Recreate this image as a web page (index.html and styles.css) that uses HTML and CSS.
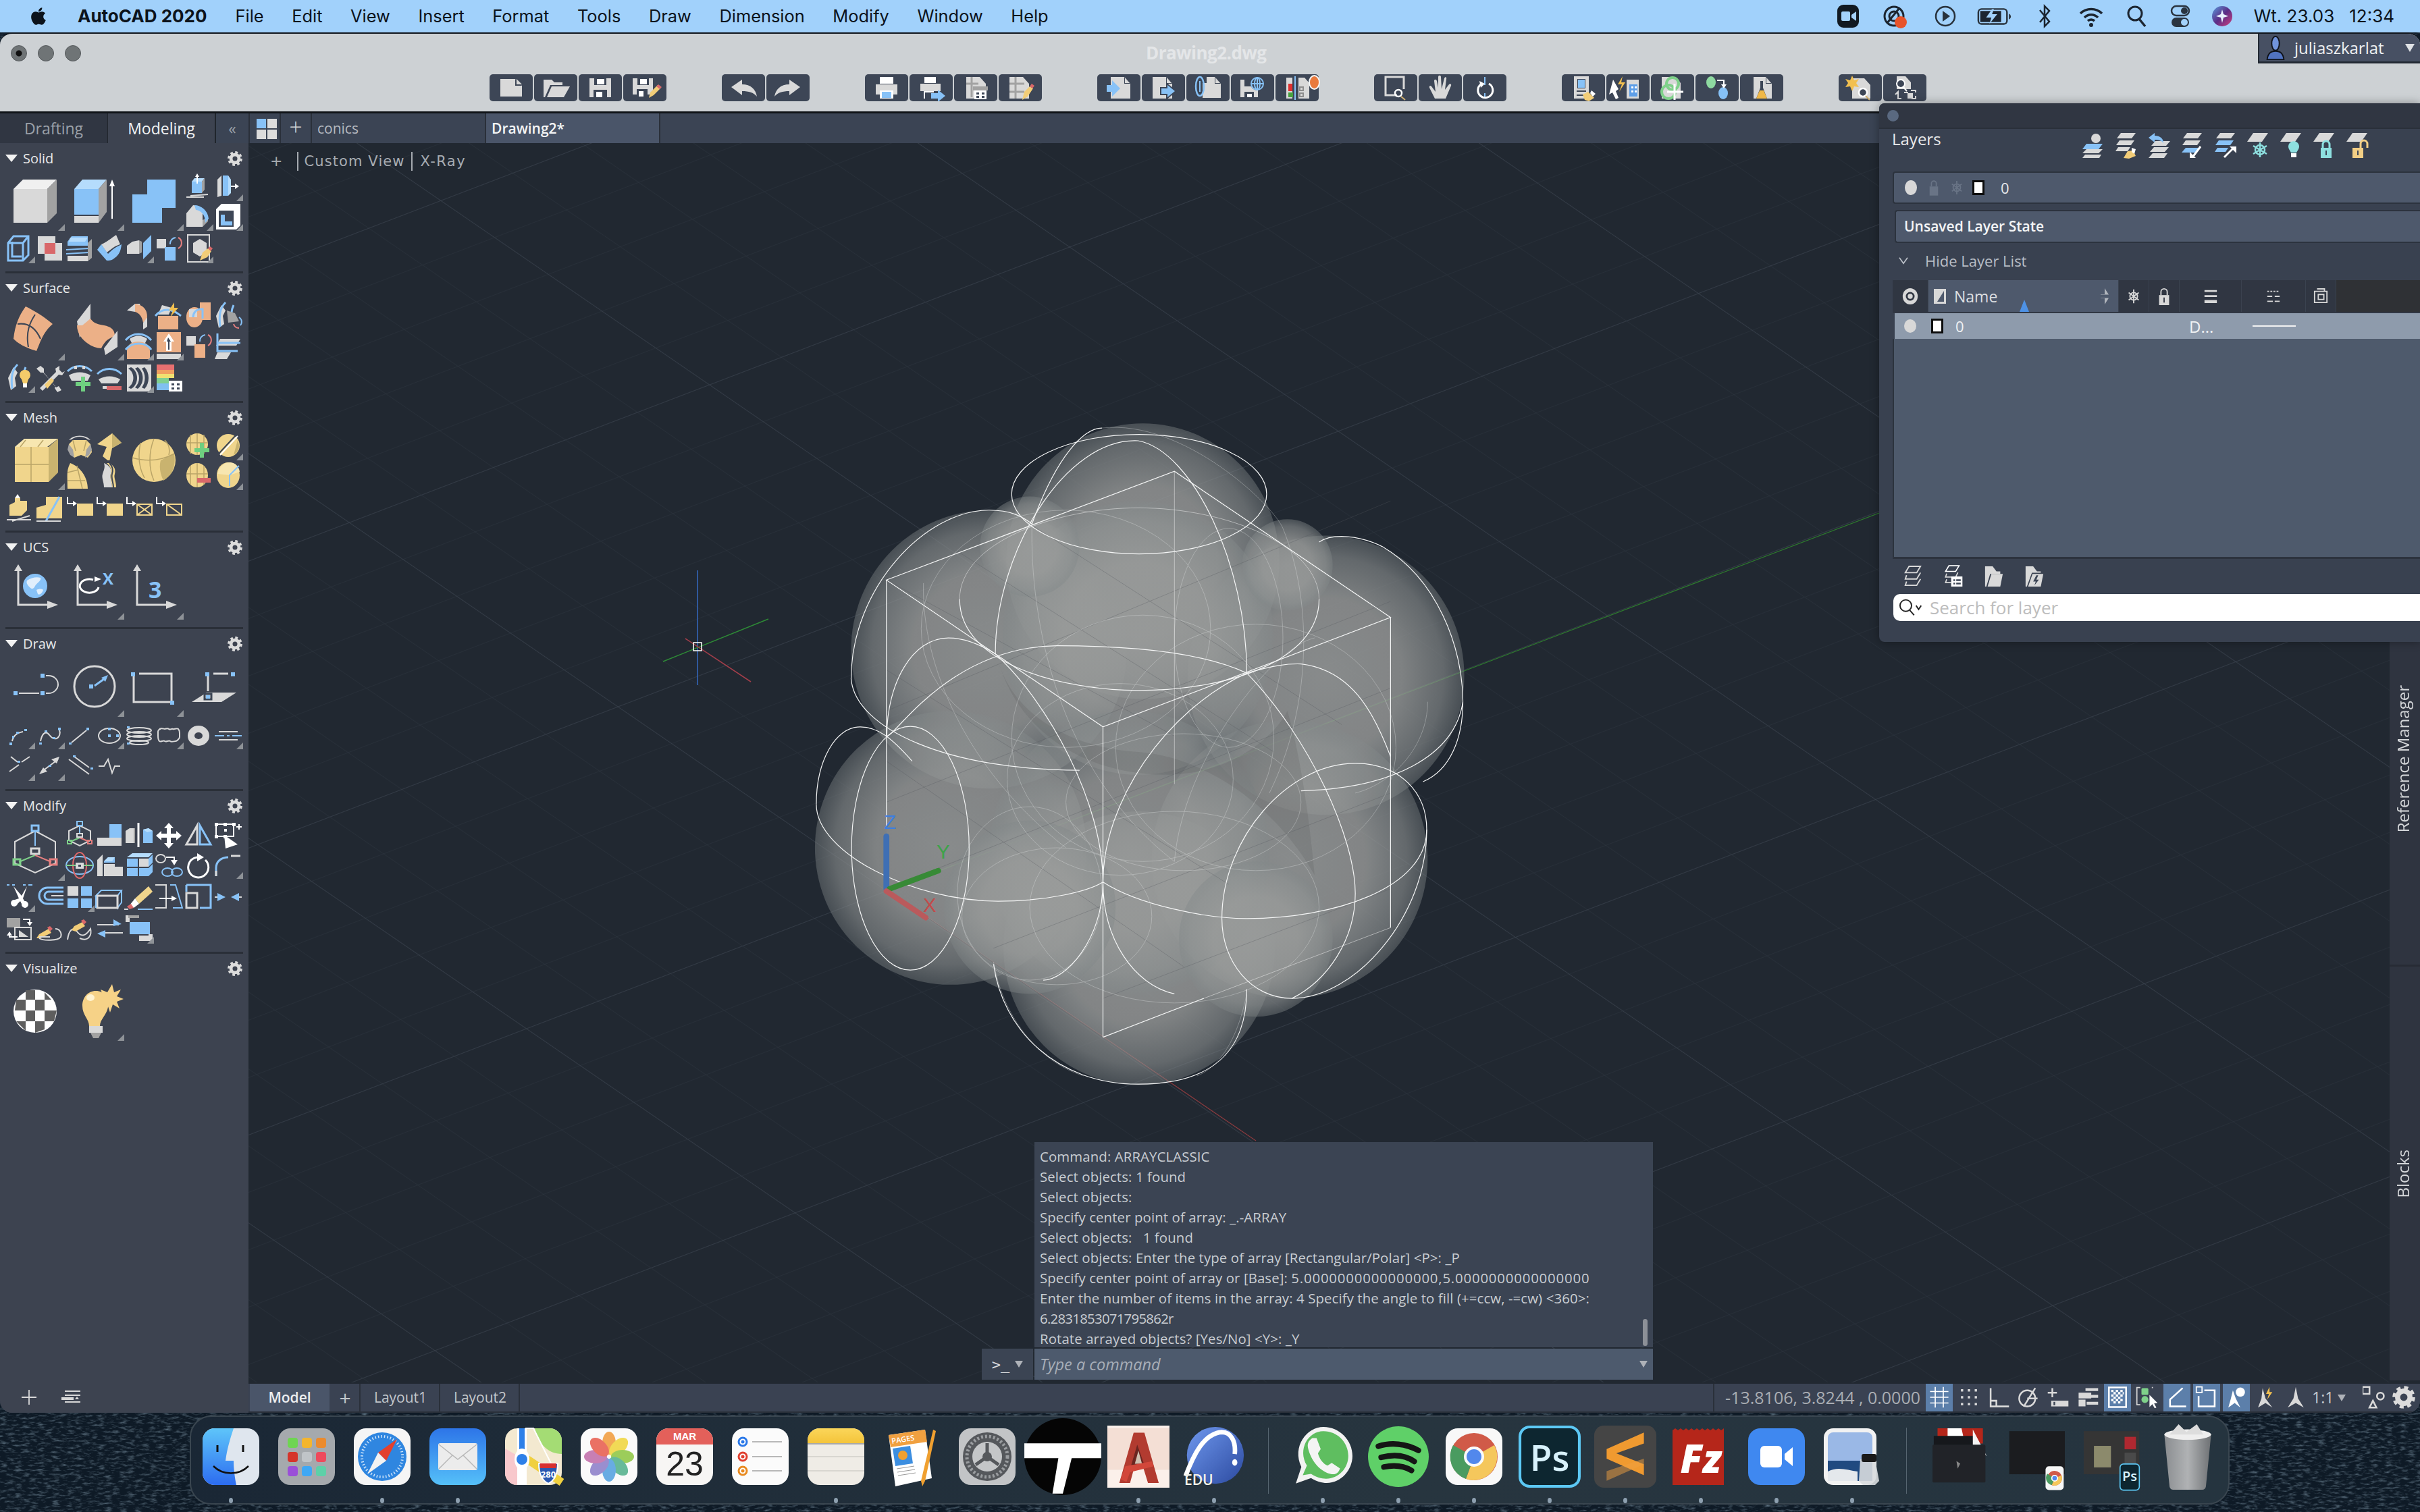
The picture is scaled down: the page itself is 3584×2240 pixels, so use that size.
FILE: index.html
```html
<!DOCTYPE html>
<html lang="en">
<head>
<meta charset="utf-8">
<title>AutoCAD 2020</title>
<link rel="stylesheet" href="styles.css">
</head>
<body>
<svg class="wallpaper" width="3584" height="2240"><filter id="sea"><feTurbulence type="fractalNoise" baseFrequency="0.09 0.3" numOctaves="3" seed="4"/><feColorMatrix values="0 0 0 0 .25  0 0 0 0 .36  0 0 0 0 .45  1.3 0 0 0 -.62"/></filter><rect width="3584" height="2240" fill="#0e1a26"/><rect width="3584" height="2240" filter="url(#sea)"/></svg>

<header class="menubar">
  <svg class="apple" viewBox="0 0 24 24"><path d="M17.05 20.28c-.98.95-2.05.8-3.08.35-1.09-.46-2.09-.48-3.24 0-1.44.62-2.2.44-3.06-.35C2.79 15.25 3.51 7.59 9.05 7.31c1.35.07 2.29.74 3.08.8 1.18-.24 2.31-.93 3.57-.84 1.51.12 2.65.72 3.4 1.8-3.12 1.87-2.38 5.98.48 7.13-.57 1.5-1.31 2.99-2.54 4.09zM12.03 7.25c-.15-2.23 1.66-4.07 3.74-4.25.29 2.58-2.34 4.5-3.74 4.25z"/></svg>
  <strong class="appname">AutoCAD 2020</strong>
  <nav class="menus"><span>File</span><span>Edit</span><span>View</span><span>Insert</span><span>Format</span><span>Tools</span><span>Draw</span><span>Dimension</span><span>Modify</span><span>Window</span><span>Help</span></nav>
  <div class="tray">
    <svg viewBox="0 0 40 40"><rect x="4" y="3" width="32" height="34" rx="9" fill="#121a22"/><rect x="10" y="13" width="13" height="14" rx="2" fill="#a3d2fb"/><path d="M25 18l7-5v14l-7-5z" fill="#a3d2fb"/></svg>
    <svg viewBox="0 0 40 40"><circle cx="18" cy="20" r="14" fill="none" stroke="#1c2530" stroke-width="3"/><circle cx="18" cy="20" r="7" fill="none" stroke="#1c2530" stroke-width="3"/><path d="M8 30L26 8" stroke="#1c2530" stroke-width="3"/><circle cx="28" cy="29" r="9" fill="#e8532a"/></svg>
    <svg viewBox="0 0 40 40"><circle cx="20" cy="20" r="14" fill="none" stroke="#28323c" stroke-width="2.5"/><path d="M16 12l11 8-11 8z" fill="#28323c"/></svg>
    <svg viewBox="0 0 56 40"><rect x="3" y="9" width="44" height="23" rx="5" fill="none" stroke="#28323c" stroke-width="2.5"/><path d="M6 12h32v17H6z" fill="#1c2530"/><path d="M24 9l-9 13h8l-3 10 12-15h-8l3-8z" fill="#a3d2fb"/><path d="M50 16v9c2-1 3-3 3-4.500s-1-3.500-3-4.500z" fill="#28323c"/></svg>
    <svg viewBox="0 0 40 40"><path d="M13 11l14 17-7 7V5l7 7-14 17" fill="none" stroke="#1c2530" stroke-width="2.500"/></svg>
    <svg viewBox="0 0 40 40"><path d="M4 16a23 23 0 0 1 32 0M10 22a14 14 0 0 1 20 0M15 27a7 7 0 0 1 10 0" fill="none" stroke="#1c2530" stroke-width="3.500"/><circle cx="20" cy="33" r="3" fill="#1c2530"/></svg>
    <svg viewBox="0 0 40 40"><circle cx="18" cy="16" r="10" fill="none" stroke="#1c2530" stroke-width="3"/><path d="M24 24l9 11" stroke="#1c2530" stroke-width="3.500"/></svg>
    <svg viewBox="0 0 40 40"><rect x="7" y="5" width="26" height="14" rx="7" fill="none" stroke="#2a3440" stroke-width="2.500"/><circle cx="26" cy="12" r="5" fill="#2a3440"/><rect x="7" y="22" width="26" height="14" rx="7" fill="#2a3440"/><circle cx="26" cy="29" r="5" fill="#a3d2fb"/></svg>
    <svg viewBox="0 0 40 40"><defs><linearGradient id="siri" x1="0" y1="0" x2="1" y2="1"><stop offset="0" stop-color="#5a9de0"/><stop offset=".5" stop-color="#5b2d86"/><stop offset="1" stop-color="#d1407c"/></linearGradient></defs><circle cx="20" cy="20" r="15" fill="url(#siri)"/><path d="M20 10l2 7 7 3-7 2-2 8-2-8-7-2 7-3z" fill="#e8f2ff"/></svg>
  </div>
  <div class="clock"><span>Wt. 23.03</span><span>12:34</span></div>
</header>

<div class="window">
  <div class="titlebar">
    <div class="titlerow">
      <div class="lights"><i class="light first"></i><i class="light"></i><i class="light"></i></div>
      <div class="doctitle">Drawing2.dwg</div>
      <div class="user"><svg class="usericon" viewBox="0 0 32 40"><ellipse cx="16" cy="13" rx="6" ry="11" fill="#7194dc" stroke="#10141c" stroke-width="2"/><path d="M3 38c1-10 6-13 13-13s12 3 13 13z" fill="#5173c0" stroke="#10141c" stroke-width="2"/></svg><span>juliaszkarlat</span><i class="usertri"></i></div>
    </div>
    <div class="toolbar">
      <div class="tgroup">
        <div class="tb"><svg viewBox="0 0 64 40"><path class="g" d="M16 7H38L48 17V33H16z"/><path class="k" d="M38 7v10h10z"/><path class="g" d="M40 7l8 8h-8z"/></svg></div>
        <div class="tb"><svg viewBox="0 0 64 40"><path class="g" d="M14 8h12l4 4h12v4H24L16 34h-2z"/><path class="g" d="M26 18H53L44 34H19z"/></svg></div>
        <div class="tb"><svg viewBox="0 0 64 40"><path class="g" d="M16 6H48V34H16z"/><path class="k" d="M23 6h18v10H23zM22 23h20v11H22z"/><path class="w" d="M27 7h11v8H27zM26 26h9v8h-9z"/></svg></div>
        <div class="tb"><svg viewBox="0 0 64 40"><path class="g" d="M14 6H44V30H14z"/><path class="k" d="M21 6h17v10H21zM20 22h16v12H20z"/><path class="w" d="M25 7h10v8H25zM23 25h7v8h-7z"/><path class="pen" d="M38 35l2-8 11-11 5 4-11 11z"/><path class="r" d="M49 18l3-3 5 4-3 3z"/></svg></div>
      </div>
      <div class="tgroup">
        <div class="tb"><svg viewBox="0 0 64 40"><path class="g" d="M14 19L30 8v7c13 0 20 7 22 18-5-6-12-8-22-8v6z"/></svg></div>
        <div class="tb"><svg viewBox="0 0 64 40"><path class="g" d="M50 19L34 8v7c-13 0-20 7-22 18 5-6 12-8 22-8v6z"/></svg></div>
      </div>
      <div class="tgroup">
        <div class="tb"><svg viewBox="0 0 64 40"><path class="w" d="M22 4h20v10H22z"/><path class="g" d="M16 15h32v15H16z"/><path class="w" d="M22 24h20v12H22z"/><path class="b" d="M25 26h14v9H25z"/></svg></div>
        <div class="tb"><svg viewBox="0 0 64 40"><path class="w" d="M22 4h17v9H22z"/><path class="g" d="M16 14h30v11H16z"/><path class="sw" d="M22 36V26h14"/><path class="b" d="M32 28h10v-5l11 9-11 9v-5H32z"/></svg></div>
        <div class="tb"><svg viewBox="0 0 64 40"><path class="g" d="M18 4h20l9 10v22H18z"/><path class="mid" d="M18 14h18M26 4v30" /><path class="d" d="M28 18h22v6H28z"/><path class="w" d="M30 24h18v13H30z"/><path class="k" d="M33 27h4v3h-4zM41 27h4v3h-4zM33 32h4v3h-4zM41 32h4v3h-4z"/></svg></div>
        <div class="tb"><svg viewBox="0 0 64 40"><path class="g" d="M16 4h20l9 10v22H16z"/><path class="mid" d="M16 14h22M16 26h22M25 4v32"/><path class="pen" d="M35 38l3-12 8-8 5 3-8 12z"/><path class="r" d="M46 18l3-4 4 3-3 4z"/></svg></div>
      </div>
      <div class="tgroup">
        <div class="tb"><svg viewBox="0 0 64 40"><path class="g" d="M20 4h20l9 10v22H20z"/><path class="k" d="M40 4v10h9z"/><path class="g" d="M41 5l7 8h-7z"/><path class="b" d="M14 16h8v-7l12 12-12 12v-7h-8z"/></svg></div>
        <div class="tb"><svg viewBox="0 0 64 40"><path class="g" d="M16 4h20l9 10v22H16z"/><path class="k" d="M36 4v10h9z"/><path class="g" d="M37 5l7 8h-7z"/><path class="k" d="M27 19h9v-7l16 13-16 13v-7h-9z"/><path class="b" d="M29 21h9v-5l11 9-11 9v-5h-9z"/></svg></div>
        <div class="tb"><svg viewBox="0 0 64 40"><path class="g" d="M24 13h6v-9h12l9 10v21H24z"/><path class="k" d="M42 4v10h9z"/><path class="g" d="M43 5l7 8h-7z"/><ellipse cx="20" cy="18" rx="6" ry="14" fill="none" stroke="#86c1f6" stroke-width="2.500"/><path class="sb" d="M20 10v16"/></svg></div>
        <div class="tb"><svg viewBox="0 0 64 40"><path class="g" d="M14 8H40V34H14z"/><path class="k" d="M20 26h14v8H20zM20 8h12v10H20z"/><path class="w" d="M24 29h7v5h-7z"/><circle cx="39" cy="14" r="10" fill="#3d4656"/><circle cx="39" cy="14" r="9" fill="none" stroke="#86c1f6" stroke-width="2"/><path class="sb" d="M39 5v18M30 14h18"/><ellipse cx="39" cy="14" rx="4" ry="9" fill="none" stroke="#86c1f6" stroke-width="2"/></svg></div>
        <div class="tb badge"><svg viewBox="0 0 64 40"><path class="g" d="M16 5h9v31h-9zM34 5h9l7 8v23H34z"/><path class="sb" d="M29 3v35"/><path fill="#e03030" d="M19 14h6v11h-6z"/><path fill="#46a040" d="M19 27h7v7h-7z"/><path class="mid2" d="M36 19h5v5h-5zM36 28h5v5h-5z"/></svg><i class="dot"></i></div>
      </div>
      <div class="tgroup">
        <div class="tb"><svg viewBox="0 0 64 40"><path class="sg3" d="M34 31H17V4h27v18"/><circle cx="36" cy="28" r="5" fill="none" stroke="#fff" stroke-width="2.500"/><path d="M40 33l6 5" stroke="#d0b070" stroke-width="2"/></svg></div>
        <div class="tb"><svg viewBox="0 0 64 40"><path class="g" d="M24 36l-8-16c-1-3 2-4 3-2l6 8-2-16c0-3 3-3 4 0l2 10V4c0-3 4-3 4 0l1 18 4-16c1-3 4-2 3 1l-2 16 6-8c2-2 4 0 3 2l-8 19z"/></svg></div>
        <div class="tb"><svg viewBox="0 0 64 40"><path class="sb" d="M32 4v12M32 28v8"/><path class="sw3" d="M38 14a11 11 0 1 1-12 1"/><path class="w" d="M24 10l8 4-6 6z"/></svg></div>
      </div>
      <div class="tgroup">
        <div class="tb"><svg viewBox="0 0 64 40"><path class="g" d="M18 3h22v33H18z"/><path class="k" d="M23 7h12v14H23z"/><path class="b" d="M24 8h10v12H24z"/><path class="sk" d="M22 25h14M22 31h12"/><path class="pen" d="M34 38l-3-8 8-4 9 9-8 5z"/><path class="w" d="M44 24l6 5-4 4-4-5z"/></svg></div>
        <div class="tb"><svg viewBox="0 0 64 40"><path class="w" d="M10 8l8 14-4 3 4 10-4 2-5-10-5 3z"/><path fill="#f2c050" d="M24 3l-7 12h6l-4 11 9-14h-6z"/><path class="g" d="M30 8h18v28H30z"/><path fill="#5d9ee8" d="M34 15h12v18H34z"/><path class="w" d="M37 18h3v3h-3zM42 18h3v3h-3zM37 24h3v3h-3zM42 24h3v3h-3z"/></svg></div>
        <div class="tb"><svg viewBox="0 0 64 40"><path class="g" d="M16 4h20l8 9v23H16z"/><circle cx="32" cy="14" r="9" fill="none" stroke="#7fd18a" stroke-width="4"/><circle cx="26" cy="26" r="10" fill="none" stroke="#7fd18a" stroke-width="4"/><path class="sw3" d="M35 14v24M24 26h24"/></svg></div>
        <div class="tb"><svg viewBox="0 0 64 40"><ellipse cx="23" cy="12" rx="7" ry="9" fill="#8ed9a0"/><ellipse cx="41" cy="28" rx="7" ry="9" fill="#86c1f6"/><path class="sw" d="M32 9h10v8"/><path class="w" d="M38 15h8l-4 6z"/></svg></div>
        <div class="tb"><svg viewBox="0 0 64 40"><path class="g" d="M20 4h18l9 10v22H20z"/><path class="k" d="M38 4v10h9z"/><path class="g" d="M39 5l7 8h-7z"/><path fill="#3d4656" d="M30 10h4v10l6 16H24l6-16z"/><path fill="#f0b848" d="M29 24h6l5 12H24z"/></svg></div>
      </div>
      <div class="tgroup">
        <div class="tb"><svg viewBox="0 0 64 40"><path class="g" d="M20 6h18l9 10v20H20z"/><path fill="#f2c050" d="M20 2l3 7 7-2-4 6 4 6-7-1-3 7-3-7-7 1 4-6-4-6 7 2z"/><circle cx="36" cy="27" r="6" fill="#3d4656" stroke="#fff" stroke-width="2.500"/><path d="M40 32l6 6" stroke="#d0b070" stroke-width="2"/></svg></div>
        <div class="tb"><svg viewBox="0 0 64 40"><path class="g" d="M20 3h13l8 9v10H20z"/><circle cx="26" cy="14" r="6" fill="#3d4656" stroke="#fff" stroke-width="2"/><path class="sw" d="M30 19l5 6"/><path class="sg" d="M18 30l4-4v10h5M37 27h-6M48 27v-3h-7M48 32v4h-6"/><path class="g" d="M36 28h8v8h-8z"/></svg></div>
      </div>
    </div>
  </div>

  <div class="main">
    <aside class="palette">
      <div class="ptabs"><div class="ptab">Drafting</div><div class="ptab active">Modeling</div><div class="pcollapse">&#171;</div></div>

      <section class="psec s192">
        <div class="phead"><i class="caret"></i><span>Solid</span><svg class="gear" viewBox="0 0 20 20"><use href="#gear"/></svg></div>
        <div class="pgrid rows-a">
          <svg class="bi" viewBox="0 0 88 88"><path fill="#f0f0f0" d="M12 26L26 12H76L62 26z"/><path class="g" d="M12 26H62V76H12z"/><path class="d" d="M62 26L76 12V62L62 76z"/><path class="m" d="M88 78v10H78z"/></svg>
          <svg class="bi" viewBox="0 0 88 88"><path class="lb" d="M14 26L26 12H62L50 26z"/><path class="b" d="M14 26H50V64H14z"/><path class="g" d="M14 66H50V76H14z"/><path class="d" d="M50 26L62 12V60L50 76z"/><path class="sw" d="M70 70V20"/><path class="w" d="M66 22l4-10 4 10z"/><path class="m" d="M88 78v10H78z"/></svg>
          <svg class="bi" viewBox="0 0 88 88"><path class="b" d="M34 12H76V54H56V76H12V34H34z"/><path class="m" d="M88 78v10H78z"/></svg>
          <svg class="si" viewBox="0 0 44 44"><path class="lb" d="M12 15l4-5h15l-4 5z"/><path class="b" d="M12 15h15v17H12z"/><path class="d" d="M27 15l4-5v17l-4 5z"/><path class="sg" d="M4 38h26M10 36l26-2"/><path class="sw" d="M20 18V6"/><path class="w" d="M17 8l3-5 3 5z"/></svg>
          <svg class="si" viewBox="0 0 44 44"><path class="g" d="M6 12l6-6v30l-6 2z"/><path class="b" d="M14 6h8v30h-8z"/><path class="lb" d="M22 6l4 6v20l-4 4z"/><path class="sw" d="M26 22h8"/><path class="w" d="M32 18l6 4-6 4z"/><path class="m" d="M44 34v10H34z"/></svg>
          <svg class="si" viewBox="0 0 44 44"><path class="g" d="M4 18h24v20H4z"/><path class="d" d="M28 38l8-8V24l-8 4z"/><path class="g" d="M4 18L14 6c3 0 5 1 7 2l7 10z"/><path class="b" d="M16 6c10 0 20 8 21 20l-5 6C32 20 26 14 18 13z"/><path class="m" d="M44 34v10H34z"/></svg>
          <svg class="si" viewBox="0 0 44 44"><path class="w" d="M4 12l8-8h28v32l-6 6H4z"/><path class="k" d="M8 14h22v24H8z"/><path class="b" d="M11 20h6v10h11v6H11z"/><path class="m" d="M44 34v10H34z"/></svg>
          <svg class="si" viewBox="0 0 44 44"><path class="sb3" d="M4 14l8-10h22v28l-8 8H4zM4 14h22v26M26 14l8-10M10 12v22h14"/><path class="m" d="M44 34v10H34z"/></svg>
          <svg class="si" viewBox="0 0 44 44"><path class="g" d="M4 4h26v26H4z"/><path class="g" d="M14 14h26v26H14z"/><path class="r" d="M14 14h16v16H14z"/></svg>
          <svg class="si" viewBox="0 0 44 44"><path class="b" d="M4 12l6-8h24v14H4z"/><path class="lb" d="M8 6h26l-4 6H6z"/><path class="sb" d="M2 24l34-2M2 30l34-2"/><path class="g" d="M4 33h30v8H4z"/><path class="d" d="M34 14l6-6v28l-6 5z"/></svg>
          <svg class="si" viewBox="0 0 44 44"><path class="g" d="M10 16C16 14 26 6 32 2l6 14c-8 2-14 8-20 12z"/><path class="b" d="M4 24l6-8 10 14c8-8 12-10 20-14-1 10-4 16-10 20-4 4-8 4-12 4z"/></svg>
          <svg class="si" viewBox="0 0 44 44"><path class="g" d="M4 18l8-6 10-2v20H4z"/><path class="d" d="M22 10l4 2v16l-4 2z"/><path class="b" d="M28 14L40 2v24L28 38z"/><path class="m" d="M44 34v10H34z"/></svg>
          <svg class="si" viewBox="0 0 44 44"><path class="g" d="M4 8h14v14H4z"/><path class="b" d="M16 20h16v20H16z"/><path class="sb" d="M24 16a9 9 0 0 1 8-10"/><path class="sr" d="M36 6a9 9 0 0 1 0 16"/></svg>
          <svg class="si" viewBox="0 0 44 44"><path class="sg" d="M6 2h32v40H6z"/><path class="g" d="M14 14l10-6 10 6v14l-10 6-10-6z"/><path class="pen" d="M24 40l4-12 8-6 5 4-6 9z"/><path class="r" d="M36 22l3-3 4 3-3 4z"/><path class="m" d="M44 34v10H34z"/></svg>
        </div>
      </section>

      <section class="psec s192">
        <div class="phead"><i class="caret"></i><span>Surface</span><svg class="gear" viewBox="0 0 20 20"><use href="#gear"/></svg></div>
        <div class="pgrid rows-a">
          <svg class="bi" viewBox="0 0 88 88"><path class="o" d="M30 8C42 14 56 22 70 34 56 46 52 60 46 74 34 70 22 66 12 56 14 36 20 22 30 8z"/><path class="sk" d="M18 34c14-2 26 4 34 22M44 20C36 32 30 46 34 68"/><path class="m" d="M88 78v10H78z"/></svg>
          <svg class="bi" viewBox="0 0 88 88"><path class="g" d="M18 30L38 4v24L22 54z"/><path class="o" d="M18 36h8l12-10c4 6 8 8 20 10 10 2 16 6 16 16-10 4-14 6-20 18-14 0-36-14-36-34z"/><path class="g" d="M58 70L78 44v24L60 80z"/><path class="m" d="M88 78v10H78z"/></svg>
          <svg class="si" viewBox="0 0 44 44"><path class="g" d="M4 14L16 4h8l-8 12z"/><path class="o" d="M16 4c12 2 18 8 18 20-2 4-4 6-6 8-2-10-6-14-12-16z"/><path class="g" d="M28 32l6-8v14l-6 4z"/></svg>
          <svg class="si" viewBox="0 0 44 44"><path class="o" d="M6 22h30v20H6z"/><path class="g" d="M12 6l14 4-4 10H6z"/><path class="sb3" d="M2 22c10-12 24-12 38 0"/><path fill="#f2c050" d="M30 2L22 14h6l-4 10 12-14h-6z"/></svg>
          <svg class="si" viewBox="0 0 44 44"><path class="o" d="M24 2h16v26H24zM4 24a12 14 0 0 1 24-2v4a12 14 0 0 1-24-2z"/><path class="g" d="M8 12h12v12H8z"/><path class="sb3" d="M14 24c0-6 4-12 12-12h2v14"/></svg>
          <svg class="si" viewBox="0 0 44 44"><path class="g" d="M12 6L4 22l4 18 8-6-2-12 4-8z"/><path class="sb3" d="M18 2c-8 8-10 18-8 36M30 6c-4 8-4 14-2 22"/><path class="d" d="M20 14l12 4 6 12-16 2z"/><path class="sr" d="M30 34a8 8 0 0 0 8 6"/><path class="sb" d="M38 24a8 8 0 0 1 2 12"/></svg>
          <svg class="si" viewBox="0 0 44 44"><path class="sb3" d="M2 14c10-12 28-12 38 0"/><path class="g" d="M8 12c8-6 18-6 26 0l-4 8H12z"/><path class="o" d="M4 42V30c0-10 8-14 16-14 10 0 18 4 18 14v12z"/><path class="sb3" d="M2 28c10-12 30-12 38 0"/><path class="m" d="M44 34v10H34z"/></svg>
          <svg class="si" viewBox="0 0 44 44"><path class="o" d="M4 2h36v30H4z"/><path class="g" d="M4 34h36v8H4z"/><path class="w" d="M22 4l8 12h-4v14h-8V16h-4z"/><path class="k" d="M21 10l4 6h-2v12h-2V16h-2z"/><path class="m" d="M44 34v10H34z"/></svg>
          <svg class="si" viewBox="0 0 44 44"><path class="g" d="M4 8h14v14H4z"/><path class="o" d="M16 20h16v20H16z"/><path class="sb" d="M24 16a9 9 0 0 1 8-10"/><path class="sr" d="M36 6a9 9 0 0 1 0 16"/></svg>
          <svg class="si" viewBox="0 0 44 44"><path class="g" d="M10 12h30l-6 10H4z"/><path class="sb3" d="M6 4v26h30"/><path class="sb3" d="M6 18h34"/><path class="g" d="M6 32h20l-6 10H2z"/></svg>
          <svg class="si" viewBox="0 0 44 44"><path class="g" d="M12 6L4 22l4 18 8-6-2-12 4-8z"/><path class="sb3" d="M18 2c-8 8-10 18-8 36M30 6c-4 8-4 14-2 22"/><path class="lt" d="M24 24a8 8 0 1 1 10 0l-2 6h-6z"/><path class="w" d="M26 30h6v6h-6z"/><path class="m" d="M44 34v10H34z"/></svg>
          <svg class="si" viewBox="0 0 44 44"><path class="g" d="M8 4l5 4v6l18 22 4-2 4 6-6 3-4-6 1-3L12 14H8L2 8z"/><path class="g" d="M36 4l-6 4 1 5-24 24 4 4 24-24 5 1 4-6-4 2-4-4z"/><path class="pen" d="M14 32l10-10 4 4-10 12z"/></svg>
          <svg class="si" viewBox="0 0 44 44"><path class="sb3" d="M4 12c10-10 26-10 36 0"/><path class="g" d="M14 4h4v5h-4zM26 4h4v5h-4z"/><path class="g" d="M6 18c10-6 22-6 32 0l-4 8H10z"/><path class="gr" d="M24 20h6v8h8v6h-8v8h-6v-8h-8v-6h8z"/></svg>
          <svg class="si" viewBox="0 0 44 44"><path class="sb3" d="M4 16c10-10 26-10 36 0"/><path class="g" d="M6 24c10-6 22-6 32 0l-4 6H10z"/><path class="g" d="M12 34h8v4h-8z"/><path class="r" d="M18 34h22v6H18z"/></svg>
          <svg class="si" viewBox="0 0 44 44"><path class="g" d="M4 2h36v40H4z"/><path class="k" d="M10 6c12 6 12 26 0 32l-4-2c10-6 10-22 0-28zM20 6c10 8 10 24 0 32l-4-2c8-8 8-20 0-28zM30 6c8 8 8 24 0 32l-4-2c6-8 6-20 0-28z"/><path class="m" d="M44 34v10H34z"/></svg>
          <svg class="si" viewBox="0 0 44 44"><path fill="#e87070" d="M4 2h26v8H4z"/><path fill="#f0a060" d="M4 10h26v6H4z"/><path fill="#f0e070" d="M4 16h26v6H4z"/><path fill="#80d090" d="M4 22h18v8H4z"/><path fill="#80c0f0" d="M4 30h18v10H4z"/><path class="w" d="M22 26h20v16H22z"/><path class="k" d="M26 30h4v3h-4zM34 30h4v3h-4zM26 36h4v3h-4zM34 36h4v3h-4z"/></svg>
        </div>
      </section>

      <section class="psec s192">
        <div class="phead"><i class="caret"></i><span>Mesh</span><svg class="gear" viewBox="0 0 20 20"><use href="#gear"/></svg></div>
        <div class="pgrid rows-a">
          <svg class="bi" viewBox="0 0 88 88"><path class="ly" d="M16 26l14-12h50L64 26z" transform="translate(-2 -2)"/><path class="y" d="M14 24H64V76H14z"/><path class="yd" d="M64 24L78 12V62L64 76z"/><path class="sy" d="M38 24V76M14 50H64M30 14L22 24M56 14l-8 10"/><path class="m" d="M88 78v10H78z"/></svg>
          <svg class="si" viewBox="0 0 44 44"><path class="g" d="M6 14a18 12 0 0 1 32 0l-4-1a14 8 0 0 0-24 0z"/><path class="y" d="M6 20l6-6h20l6 6 2 12-6 8-10-4-10 4-6-8z"/><path class="d" d="M6 20l6 8 2 12-6-4-4-8zM38 20l-6 8-2 12 6-4 4-8z"/><path class="sy" d="M12 14l4 16M32 14l-4 16"/></svg>
          <svg class="si" viewBox="0 0 44 44"><path class="y" d="M4 20L26 4l14 14-14 8-4 20-10-8 6-14z"/><path class="yd" d="M26 4l14 14-14 8z"/></svg>
          <svg class="bi" viewBox="0 0 88 88"><ellipse class="y" cx="44" cy="44" rx="32" ry="32"/><path class="yd" d="M74 34c2 16 0 30-16 40-6-12-6-22-4-30z"/><path class="sy" d="M12 40c20 6 40 6 62-6M44 12c-8 20-8 44 0 62M24 18c-4 20-2 38 6 52M60 14c6 6 8 14 6 22"/></svg>
          <svg class="si" viewBox="0 0 44 44"><ellipse class="y" cx="20" cy="20" rx="16" ry="16"/><path class="sy" d="M4 18h32M20 4v32M10 6v28M30 6v28"/><path class="gr" d="M24 18h6v8h8v6h-8v8h-6v-8h-8v-6h8z"/></svg>
          <svg class="si" viewBox="0 0 44 44"><ellipse class="y" cx="22" cy="22" rx="17" ry="17"/><path class="sk2" d="M8 34L34 6"/><path class="sw" d="M10 36L36 8"/><path class="yd" d="M36 14c4 10 2 18-6 22z"/><path class="m" d="M44 34v10H34z"/></svg>
          <svg class="si" viewBox="0 0 44 44"><path class="y" d="M4 42c0-20-2-26 4-38 16 6 26 22 26 38z"/><path class="sy" d="M4 18l16-4M4 30h26M18 8l8 34"/></svg>
          <svg class="si" viewBox="0 0 44 44"><path class="g" d="M14 4c8 4 12 8 10 16-2 6 2 10 2 20H14c0-8-4-14-2-20 2-6 4-10 2-16z"/><path class="y" d="M18 4h4c6 4 10 8 8 16-2 6 2 10 2 20h-6c0-8-4-14-2-20 2-8-2-12-6-16z"/><path class="sk" d="M22 4c4 4 6 10 4 16s2 12 2 20"/></svg>
          <svg class="si" viewBox="0 0 44 44"><ellipse class="y" cx="20" cy="22" rx="16" ry="18"/><path class="sy" d="M4 20h32M20 4v36M10 8v28M30 8v28"/><path class="r" d="M20 26h20v7H20z"/></svg>
          <svg class="si" viewBox="0 0 44 44"><ellipse class="y" cx="22" cy="22" rx="17" ry="19"/><path class="ly" d="M6 20C8 10 16 3 24 3c8 0 14 6 15 14l-15 5z"/><path class="sb" d="M38 8L24 22v16"/><path class="m" d="M44 34v10H34z"/></svg>
          <svg class="si" viewBox="0 0 44 44"><path class="y" d="M6 34V18l8-4v-6l4-4 4 4v4h10v14l-8 8z"/><path class="w" d="M14 8l4-6 4 6z"/><path class="sg" d="M2 40h36M10 42l26-8"/></svg>
          <svg class="si" viewBox="0 0 44 44"><path class="y" d="M2 22l14-4v20H2z"/><path class="y" d="M18 6h24v32H18z" transform="translate(-2 0)"/><path class="sb3" d="M16 42L36 6"/><path class="sg" d="M2 42h36"/></svg>
          <svg class="si" viewBox="0 0 44 44"><path class="sw" d="M4 6v10h12"/><path class="w" d="M12 12l6 4-6 4z"/><path class="y" d="M18 16h24v18H18z"/></svg>
          <svg class="si" viewBox="0 0 44 44"><path class="sw" d="M4 6v10h12"/><path class="w" d="M12 12l6 4-6 4z"/><path class="y" d="M18 16h24v18H18z"/></svg>
          <svg class="si" viewBox="0 0 44 44"><path class="sw" d="M4 6v10h12"/><path class="w" d="M12 12l6 4-6 4z"/><path class="sy2" d="M19 17h22v16H19zM19 17l22 16M41 17L19 33"/></svg>
          <svg class="si" viewBox="0 0 44 44"><path class="sw" d="M4 6v10h12"/><path class="w" d="M12 12l6 4-6 4z"/><path class="sy2" d="M19 17h22v16H19zM19 17l22 16"/></svg>
        </div>
      </section>

      <section class="psec s143">
        <div class="phead"><i class="caret"></i><span>UCS</span><svg class="gear" viewBox="0 0 20 20"><use href="#gear"/></svg></div>
        <div class="pgrid rows-b">
          <svg class="bi" viewBox="0 0 88 88"><path class="sg3" d="M19 14V66H66"/><path class="g" d="M13 16l6-10 6 10zM62 60l16 6-16 6z"/><ellipse class="b" cx="44" cy="38" rx="18" ry="18"/><path class="k2" d="M32 30c6-4 14-6 20-4 2 4-6 8-8 12s-4 6-8 2c-2-2-6-6-4-10zM46 44c4-2 8-2 10 0-2 6-6 8-8 6z"/></svg>
          <svg class="bi" viewBox="0 0 88 88"><path class="sg3" d="M19 14V66H66"/><path class="g" d="M13 16l6-10 6 10zM62 60l16 6-16 6z"/><path class="sw3" d="M50 40a14 10 0 1 1-8-11"/><path class="w" d="M44 24l10 4-10 4z"/><text class="ux" x="56" y="36">X</text><path class="m" d="M88 78v10H78z"/></svg>
          <svg class="bi" viewBox="0 0 88 88"><path class="sg3" d="M19 14V66H66"/><path class="g" d="M13 16l6-10 6 10zM62 60l16 6-16 6z"/><text class="ux3" x="36" y="56">3</text><path class="m" d="M88 78v10H78z"/></svg>
        </div>
      </section>

      <section class="psec s240">
        <div class="phead"><i class="caret"></i><span>Draw</span><svg class="gear" viewBox="0 0 20 20"><use href="#gear"/></svg></div>
        <div class="pgrid rows-c">
          <svg class="bi" viewBox="0 0 88 88"><path class="b" d="M12 50h6v6h-6zM52 50h6v6h-6zM52 24h6v6h-6z"/><path class="sg" d="M20 53h30M60 27h4c8 0 14 6 14 13s-6 13-14 13h-4"/></svg>
          <svg class="bi" viewBox="0 0 88 88"><circle class="sg3" cx="44" cy="43" r="30"/><path class="b" d="M36 40h6v6h-6z"/><path class="sb3" d="M44 42l14-10"/><path class="b" d="M54 30l10-4-4 10z"/><path class="m" d="M88 78v10H78z"/></svg>
          <svg class="bi" viewBox="0 0 88 88"><path class="sg3" d="M14 28V66H70V24H22"/><path class="b" d="M10 22h6v6h-6zM68 64h6v6h-6z"/><path class="m" d="M88 78v10H78z"/></svg>
          <svg class="bi" viewBox="0 0 88 88"><path class="g" d="M12 66L34 52H78L56 66z"/><path class="sg3" d="M36 50V26M44 24h22"/><path class="b" d="M32 22h6v6h-6zM70 22h6v6h-6z"/><path class="sk3" d="M31 54h10v8H31z"/><path class="b" d="M33 56h6v5h-6z"/></svg>
          <svg class="si" viewBox="0 0 44 44"><path class="sg" d="M10 32c2-8 6-12 16-14"/><path class="b" d="M6 34h4v4H6zM10 24h3v4h-3zM16 18h4v3h-4zM28 14h4v3h-4z"/><path class="m" d="M44 34v10H34z"/></svg>
          <svg class="si" viewBox="0 0 44 44"><path class="sg" d="M8 32c2-10 6-14 10-12 4 2 6 10 14 8 4-2 6-8 4-12"/><path class="b" d="M6 34h4v3H6zM14 16h4v3h-4zM26 26h4v3h-4zM34 12h4v4h-4z"/><path class="m" d="M44 34v10H34z"/></svg>
          <svg class="si" viewBox="0 0 44 44"><path class="sg" d="M10 34L32 16"/><path class="b" d="M6 34h4v3H6zM32 12h4v4h-4z"/></svg>
          <svg class="si" viewBox="0 0 44 44"><ellipse class="sg" cx="22" cy="24" rx="16" ry="11"/><path class="b" d="M20 12h4v4h-4zM20 22h4v4h-4zM32 22h4v4h-4z"/><path class="m" d="M44 34v10H34z"/></svg>
          <svg class="si" viewBox="0 0 44 44"><ellipse class="sg" cx="22" cy="16" rx="18" ry="4"/><ellipse class="sg" cx="22" cy="22" rx="18" ry="4"/><ellipse class="sg" cx="22" cy="28" rx="18" ry="4"/><ellipse class="sg" cx="22" cy="34" rx="14" ry="3"/><path class="b" d="M4 10h4v3H4zM4 34h4v3H4z"/></svg>
          <svg class="si" viewBox="0 0 44 44"><path class="sg" d="M8 14c4-2 6 0 8 0s4-2 6 0 4-1 6 0 6-2 8 0 2 4 2 6 0 4 0 6-4 6-6 6-6 2-8 0-6 2-8 0-6 2-8 0-2-6-2-8 0-4 0-6 2-4 4-4z"/><path class="m" d="M44 34v10H34z"/></svg>
          <svg class="si" viewBox="0 0 44 44"><ellipse class="g" cx="22" cy="24" rx="16" ry="15"/><ellipse cx="22" cy="24" rx="6" ry="5" fill="#3d4350"/></svg>
          <svg class="si" viewBox="0 0 44 44"><path class="sg" d="M8 18h28M8 30h28"/><path class="sb" d="M2 24h14M20 24h4M28 24h14"/><path class="m" d="M44 34v10H34z"/></svg>
          <svg class="si" viewBox="0 0 44 44"><path class="sg" d="M8 8l10 8M36 8L24 16M20 20L6 30"/><path class="b" d="M18 14h4v3h-4z"/><path class="m" d="M44 34v10H34z"/></svg>
          <svg class="si" viewBox="0 0 44 44"><path class="sg" d="M10 30L34 12"/><path class="b" d="M20 20h4v3h-4z"/><path class="g" d="M36 8l-12 4 8 6zM6 34l12-4-6-6z"/><path class="m" d="M44 34v10H34z"/></svg>
          <svg class="si" viewBox="0 0 44 44"><path class="sg" d="M6 12l30 22M14 8l22 16"/><path class="b" d="M12 6h4v3h-4zM38 24h4v3h-4z"/></svg>
          <svg class="si" viewBox="0 0 44 44"><path class="sg" d="M6 22h8l6-10 6 20 4-10h8"/></svg>
        </div>
      </section>

      <section class="psec s241">
        <div class="phead"><i class="caret"></i><span>Modify</span><svg class="gear" viewBox="0 0 20 20"><use href="#gear"/></svg></div>
        <div class="pgrid rows-d">
          <svg class="bi big2" viewBox="0 0 88 88"><path class="sg" d="M14 30L44 14 74 30V62L44 76 14 62z"/><path class="sb" d="M44 14v22"/><path class="sgr" d="M44 50L20 60"/><path class="sr" d="M44 50L68 60"/><path class="sb3" d="M39 6h10v8H39z"/><path class="sg3" d="M38 40h12v8H38z"/><path class="sgr3" d="M12 56h10v8H12z"/><path class="sr3" d="M66 56h10v8H66z"/><path class="m" d="M88 78v10H78z"/></svg>
          <svg class="si" viewBox="0 0 44 44"><path class="sg" d="M6 16L22 8l16 8v14l-16 8-16-8z"/><path class="sb" d="M22 8v12"/><path class="sgr" d="M22 26L8 32"/><path class="sr" d="M22 26l14 6"/><path class="sb" d="M18 2h8v6h-8z"/><path class="sg" d="M18 20h8v5h-8z"/><path class="sgr" d="M4 30h6v5H4z"/><path class="sr" d="M34 30h6v5h-6z"/></svg>
          <svg class="si" viewBox="0 0 44 44"><path class="b" d="M22 6h18v20H22z"/><path class="g" d="M4 26h36v12H4z"/></svg>
          <svg class="si" viewBox="0 0 44 44"><path class="g" d="M2 16l6-4h8v22H2z"/><path class="d" d="M14 12l2 0v22h-2z"/><path class="sw3" d="M21 4v36"/><path class="b" d="M28 14l8-2 6 4v18H28z"/><path class="lb" d="M28 14l8-2 6 4-8 2z"/></svg>
          <svg class="si" viewBox="0 0 44 44"><path class="w" d="M22 4l7 8h-4v8h8v-4l8 7-8 7v-4h-8v8h4l-7 8-7-8h4v-8h-8v4l-8-7 8-7v4h8v-8h-4z"/></svg>
          <svg class="si" viewBox="0 0 44 44"><path class="sg3" d="M20 8L4 36h16z"/><path class="sb3" d="M24 8v28h16z"/></svg>
          <svg class="si" viewBox="0 0 44 44"><path class="sw" d="M4 6h26v18H4z"/><path class="w" d="M2 4h5v5H2zM28 4h5v5h-5zM2 22h5v5H2zM15 4h5v5h-5zM15 22h5v5h-5zM16 13h4v4h-4z"/><path class="w" d="M16 22l20 14-12 4-6 2z"/><path class="sw" d="M34 10h8M38 6v8"/></svg>
          <svg class="si" viewBox="0 0 44 44"><ellipse class="sb" cx="22" cy="24" rx="20" ry="13"/><ellipse cx="22" cy="24" rx="10" ry="19" fill="none" stroke="#e0686a" stroke-width="2"/><path class="sgr" d="M2 24h40"/><path class="g" d="M16 20h12v9H16z"/><path class="k" d="M20 23h4v3h-4z"/></svg>
          <svg class="si" viewBox="0 0 44 44"><path class="g" d="M4 16l8-8v32H4z"/><path class="b" d="M14 18l6-6h10v8H14z"/><path class="lb" d="M20 12h10l-4 6H14z"/><path class="g" d="M14 22h16v4h12v14H14z"/></svg>
          <svg class="si" viewBox="0 0 44 44"><path class="b" d="M4 14h16v12H4zM4 28h16v12H4zM22 28h14v12H22z"/><path class="g" d="M22 14h14v12H22z"/><path class="lb" d="M4 12l8-6h30l-6 6z"/><path class="b" d="M36 14l6-6v12l-6 6zM36 28l6-6v12l-6 6z"/></svg>
          <svg class="si" viewBox="0 0 44 44"><ellipse class="sg" cx="10" cy="14" rx="7" ry="6"/><ellipse class="sb" cx="20" cy="34" rx="8" ry="6"/><ellipse class="sb" cx="34" cy="34" rx="8" ry="6"/><path class="sw" d="M18 12h12v8"/><path class="w" d="M25 16h10l-5 8z"/></svg>
          <svg class="si" viewBox="0 0 44 44"><path class="sw3" d="M32 16a15 15 0 1 1-12-4"/><path class="w" d="M20 6l10 6-10 6z"/></svg>
          <svg class="si" viewBox="0 0 44 44"><path class="sb3" d="M4 40V28c0-10 8-16 18-16"/><path class="sg3" d="M4 40V32M26 10h14"/><path class="m" d="M44 34v10H34z"/></svg>
          <svg class="si" viewBox="0 0 44 44"><path class="sb" d="M2 4h4M10 4h4M26 4h4M34 4h6"/><path class="w" d="M12 6l12 14 8-14-6 18c2 4 2 4 4 4a5 5 0 1 1-6 4l-2-4-4 4a5 5 0 1 1-4-6l6-2z"/><path class="m" d="M44 34v10H34z"/></svg>
          <svg class="si" viewBox="0 0 44 44"><path class="sb3" d="M42 8H18a12 12 0 0 0 0 24h24M42 14H20a6 6 0 0 0 0 12h22"/><path class="sg" d="M42 20H24"/></svg>
          <svg class="si" viewBox="0 0 44 44"><path class="g" d="M4 6h16v14H4z"/><path class="b" d="M24 6h16v14H24zM4 24h16v14H4zM24 24h16v14H24z"/><path class="m" d="M44 34v10H34z"/></svg>
          <svg class="si" viewBox="0 0 44 44"><path class="sb" d="M2 20l8-8h30l-6 8zM34 20v18l6-8V12"/><path class="sg3" d="M4 20h30v18H4z"/><path class="sb" d="M2 20v18"/></svg>
          <svg class="si" viewBox="0 0 44 44"><path class="y" d="M16 24L36 6l6 8-20 18z"/><path class="w" d="M8 34l8-10 6 8-8 6z"/><path class="r" d="M4 36l6-4 4 6-6 2z"/><path class="sb" d="M20 40h22"/><path class="sg" d="M0 40h6"/></svg>
          <svg class="si" viewBox="0 0 44 44"><path class="sg" d="M2 4h16v34H2"/><path class="sb" d="M24 4h8l10 34H28"/><path class="sw" d="M8 24h22"/><path class="w" d="M26 20l8 4-8 4z"/></svg>
          <svg class="si" viewBox="0 0 44 44"><path class="sb3" d="M4 4h36v34H24M4 4v10"/><path class="sg3" d="M4 16h16v22H4z"/></svg>
          <svg class="si" viewBox="0 0 44 44"><path class="sg" d="M2 22h6M36 22h6"/><path class="b" d="M6 16l12 6-12 6zM38 16l-12 6 12 6z"/></svg>
          <svg class="si" viewBox="0 0 44 44"><path class="d" d="M2 6h20v14H2z"/><path class="sg" d="M14 20h24v18H14z"/><path class="g" d="M20 24l14 10H20z"/><path class="sw" d="M26 8h10v6M18 34H6v-4"/><path class="w" d="M32 12h8l-4 6zM2 32h8l-4-6z"/></svg>
          <svg class="si" viewBox="0 0 44 44"><path class="sg" d="M6 36c6 4 28 4 32-2 2-6-2-12-8-12"/><path class="pen" d="M2 36l4-6 14-8 4 6-16 8z"/><path class="r" d="M18 20l4-2 4 4-4 4z"/><path class="sg" d="M6 34h16"/></svg>
          <svg class="si" viewBox="0 0 44 44"><path class="sg" d="M4 38c2-14 8-20 14-12s12 8 20-4c2 8-2 20-16 14"/><path class="pen" d="M10 24l4-6 12-6 4 6-14 8z"/><path class="r" d="M24 10l4-2 4 4-4 4z"/></svg>
          <svg class="si" viewBox="0 0 44 44"><path class="sg" d="M4 16h32M10 28h32"/><path class="b" d="M28 8l12 7-12 3zM16 24l-12 5 12 6z"/></svg>
          <svg class="si" viewBox="0 0 44 44"><path class="g" d="M2 2h18v4H8v6H2z"/><path class="d" d="M6 2h16v4H6z"/><path class="b" d="M8 12h30v18H8z"/><path class="g" d="M22 32h14v-2h6v10H22z"/><path class="m" d="M44 34v10H34z"/></svg>
        </div>
      </section>

      <section class="psec s143">
        <div class="phead"><i class="caret"></i><span>Visualize</span><svg class="gear" viewBox="0 0 20 20"><use href="#gear"/></svg></div>
        <div class="pgrid rows-b">
          <svg class="bi" viewBox="0 0 88 88"><ellipse class="w" cx="44" cy="44" rx="32" ry="32"/><path class="ck" d="M30 13h14v14H30zM58 16l10 11H58zM16 27h14v16H14zM44 27h14v16H44zM30 43h14v16H30zM58 43h18l-4 16H58zM16 59h14v14zM44 59h14v12l-14 5z"/></svg>
          <svg class="bi" viewBox="0 0 88 88"><path class="lt2" d="M36 66c0-10-10-16-10-30 0-12 8-22 20-22s20 10 18 24c-2 12-12 18-12 28z"/><ellipse cx="38" cy="24" rx="6" ry="5" fill="#fff3d0"/><path class="g" d="M36 66h20v10H36z"/><path class="d" d="M38 76h16l-4 8H42z"/><path class="lt2" d="M70 4l3 12 10 -4-6 10 10 4-10 4 4 10-10-6-4 12-4-12-10 6 4-10-10-4 10-4-4-10 10 4z"/><path class="m" d="M88 78v10H78z"/></svg>
        </div>
      </section>

      <div class="pfoot"><svg viewBox="0 0 24 24"><path d="M12 1v22M1 12h22" fill="none" stroke="#d8d8d8" stroke-width="1.800"/></svg><svg viewBox="0 0 28 24"><path d="M5 2h23v2H5zM5 8h23v2H5zM0 12h18v4H0zM5 18h23v2H5z" fill="#d8d8d8"/><path d="M20 15l3-4 3 4z" fill="#d8d8d8"/></svg></div>
    </aside>

    <div class="work">
      <div class="doctabs">
        <div class="dt-grid"><i></i><i></i><i></i><i></i></div>
        <div class="dt-plus">+</div>
        <div class="dt">conics</div>
        <div class="dt active">Drawing2*</div>
      </div>

      <div class="canvas">
        <svg class="scene" viewBox="368 212 3216 1836">
          <defs>
            <pattern id="gridA" patternUnits="userSpaceOnUse" width="94" height="94" patternTransform="translate(368 1811) rotate(34.440)"><path d="M0 0H94" class="gl"/></pattern>
            <pattern id="gridB" patternUnits="userSpaceOnUse" width="79.400" height="79.400" patternTransform="translate(368 1681) rotate(-20.940)"><path d="M0 0H79.400" class="gl"/></pattern>
            <pattern id="gridA5" patternUnits="userSpaceOnUse" width="470" height="470" patternTransform="translate(368 1811) rotate(34.440)"><path d="M0 0H470" class="gm"/></pattern>
            <pattern id="gridB5" patternUnits="userSpaceOnUse" width="397" height="397" patternTransform="translate(368 1681) rotate(-20.940)"><path d="M0 0H397" class="gm"/></pattern>
            <radialGradient id="sph"><stop offset="0" stop-color="#989a99" stop-opacity=".84"/><stop offset=".55" stop-color="#969897" stop-opacity=".8"/><stop offset=".85" stop-color="#8c9090" stop-opacity=".62"/><stop offset="1" stop-color="#7f8586" stop-opacity=".42"/></radialGradient>
          </defs>
          <rect x="368" y="212" width="3216" height="1836" fill="url(#gridA)"/>
          <rect x="368" y="212" width="3216" height="1836" fill="url(#gridB)"/>
          <rect x="368" y="212" width="3216" height="1836" fill="url(#gridA5)"/>
          <rect x="368" y="212" width="3216" height="1836" fill="url(#gridB5)"/>
          <path class="axg" d="M1391 1290L2783 760"/>
          <path class="axr" d="M1371 1357L1860 1690"/>
          <g class="cross"><path class="cb" d="M1033 845V1015"/><path class="cg" d="M982 980L1138 917"/><path class="cr" d="M1015 946L1112 1010"/><rect class="cs" x="1027" y="952" width="12" height="12"/></g>

          <svg x="1150" y="580" width="1050" height="1060" viewBox="0 0 1568 1568" preserveAspectRatio="none">
            <g fill="url(#sph)">
              <circle cx="810" cy="372" r="302"/><circle cx="470" cy="565" r="305"/><circle cx="1215" cy="622" r="306"/><circle cx="385" cy="1000" r="300"/><circle cx="1135" cy="1025" r="305"/><circle cx="802" cy="1220" r="300"/><circle cx="800" cy="540" r="300"/><circle cx="780" cy="1010" r="310"/><circle cx="560" cy="1130" r="190"/><circle cx="1060" cy="1200" r="170"/><circle cx="560" cy="340" r="110"/><circle cx="1130" cy="380" r="100"/>
            </g>
            <path class="boxfill" d="M243 413L880 175L1358 495V1175L722 1415L243 1093z"/>
            <path class="shade" d="M490 590C540 760 700 840 860 840 1000 840 1100 760 1130 700 1160 800 1180 950 1190 1060 1100 900 940 800 800 790 640 780 520 700 490 590z"/>
            <path class="gridover" d="M243 413L880 755M400 350L1100 790M560 290L1250 730M243 610L1000 1080M243 810L900 1260M300 1130L722 1415M243 700L1358 240M243 900L1358 460M243 1090L1358 650M480 1220L1358 880M722 1330L1358 1090"/>
            <g class="w2">
              <ellipse cx="810" cy="760" rx="290" ry="270"/><ellipse cx="760" cy="850" rx="250" ry="210"/><ellipse cx="1000" cy="540" rx="120" ry="240"/><ellipse cx="640" cy="520" rx="320" ry="260"/><ellipse cx="900" cy="900" rx="260" ry="150"/><ellipse cx="560" cy="1100" rx="160" ry="190"/><ellipse cx="1060" cy="780" rx="310" ry="270"/><ellipse cx="880" cy="1130" rx="320" ry="210"/><ellipse cx="620" cy="1150" rx="210" ry="150"/>
              <path d="M325 420C320 600 420 830 640 1000M565 290C560 500 620 830 880 1030M1190 540C1100 560 900 800 880 1030M1120 300C1190 470 1180 700 1090 880M1440 680C1440 780 1360 860 1280 880M480 1250C500 1370 580 1470 680 1500M1040 1320C1020 1420 980 1480 930 1500M720 80C900 60 1100 250 1120 300"/>
            </g>
            <path class="w3" d="M405 455C405 330 620 255 800 255 1000 255 1200 340 1200 455M880 175V860M1358 1175L945 1330"/>
            <g class="w1">
              <ellipse cx="802" cy="225" rx="282" ry="131"/>
              <path d="M484 575C484 350 640 100 800 108 920 130 1040 380 1040 617"/>
              <path d="M405 455C405 600 640 655 800 655 1000 655 1200 590 1200 455"/>
              <path d="M165 630C165 430 330 260 470 260 520 260 545 275 565 290 620 140 680 80 720 80"/>
              <path d="M1200 330C1230 310 1290 315 1340 340 1460 410 1518 560 1518 680 1518 760 1490 830 1430 855"/>
              <path d="M88 905C88 1010 300 1117 490 1117 600 1117 690 1095 722 1075 800 1125 950 1155 1040 1155 1230 1155 1438 1090 1438 960"/>
              <path d="M88 905C88 810 130 735 185 735 225 735 255 760 300 810"/>
              <path d="M244 755C244 640 300 540 380 540 420 540 460 560 484 575 600 680 722 900 722 1075 722 1200 640 1290 590 1290"/>
              <path d="M722 1075C722 900 860 700 1040 617 1100 600 1130 596 1160 597 1270 610 1320 700 1358 800"/>
              <path d="M1040 617C1180 760 1280 980 1280 1100 1280 1200 1220 1290 1140 1330"/>
              <ellipse cx="296" cy="1001" rx="130" ry="267"/>
              <path d="M985 1155C985 980 1130 815 1280 815 1380 815 1438 880 1438 960 1438 1150 1280 1330 1140 1330 1050 1330 985 1250 985 1155z"/>
              <path d="M480 1255C500 1400 620 1518 800 1518 960 1518 1040 1450 1040 1310"/>
              <path d="M244 755C260 760 380 560 620 557 800 557 950 575 1040 617"/>
              <path d="M722 1075C722 1200 790 1300 880 1320"/>
              <path d="M165 630C175 740 380 830 670 830"/>
              <path d="M1518 680C1500 800 1360 870 1160 875"/>
              <path d="M243 413L880 175L1358 495L722 735zM243 413V955M722 735V1415M1358 495V1175M722 1415L945 1330"/>
            </g>
            <path class="ub" d="M243 975V1090"/><path class="ug" d="M250 1090L358 1050"/><path class="ur" d="M243 1095L330 1153"/>
            <text class="lz" x="238" y="958">Z</text><text class="ly2" x="354" y="1024">Y</text><text class="lx" x="324" y="1140">X</text>
          </svg>
        </svg>

        <div class="viewlabel"><span class="vplus">+</span><span class="vsep">Custom View</span><span class="vsep">X-Ray</span></div>

        <div class="sidestrip"><div class="side s1"><span>Reference Manager</span></div><div class="side s2"><span>Blocks</span></div></div>

        <div class="command">
          <div class="cmdlog">
            <p>Command: ARRAYCLASSIC</p>
            <p>Select objects: 1 found</p>
            <p>Select objects:</p>
            <p>Specify center point of array: _.-ARRAY</p>
            <p>Select objects: &nbsp; 1 found</p>
            <p>Select objects: Enter the type of array [Rectangular/Polar] &lt;P&gt;: _P</p>
            <p>Specify center point of array or [Base]: <span class="num-wide">5.0000000000000000,5.0000000000000000</span></p>
            <p>Enter the number of items in the array: 4 Specify the angle to fill (+=ccw, -=cw) &lt;360&gt;:</p>
            <p><span class="num-tight">6.2831853071795862r</span></p>
            <p>Rotate arrayed objects? [Yes/No] &lt;Y&gt;: _Y</p>
            <i class="scrollthumb"></i>
          </div>
          <div class="cmdinput">
            <div class="prompt"><span>&gt;_</span><i class="tri"></i></div>
            <div class="field"><em>Type a command</em><i class="tri"></i></div>
          </div>
        </div>
      </div>

      <footer class="status">
        <div class="stab active">Model</div>
        <div class="splus">+</div>
        <div class="stab">Layout1</div>
        <div class="stab">Layout2</div>
        <div class="coords">-13.8106, 3.8244 , 0.0000</div>
        <div class="sbtn on"><svg viewBox="0 0 40 40"><path class="sw" d="M4 10h32M4 20h32M4 30h32M13 2v36M27 2v36"/></svg></div>
        <div class="sbtn"><svg viewBox="0 0 40 40"><path class="g" d="M6 6h4v4H6zM18 6h4v4h-4zM30 6h4v4h-4zM6 18h4v4H6zM18 18h4v4h-4zM30 18h4v4h-4zM6 30h4v4H6zM18 30h4v4h-4zM30 30h4v4h-4z"/></svg></div>
        <div class="sbtn"><svg viewBox="0 0 40 40"><path class="sg3" d="M6 4V36H38M16 36V26H6"/></svg></div>
        <div class="sbtn"><svg viewBox="0 0 40 40"><circle class="sg3" cx="18" cy="22" r="14"/><path class="sg3" d="M12 36L32 4M18 22H36"/></svg></div>
        <div class="sbtn"><svg viewBox="0 0 40 40"><path class="sg3" d="M10 4V20M2 12H18"/><path class="g" d="M8 26H38V36H8z"/><path class="k" d="M12 28h3v6h-3z"/></svg></div>
        <div class="sbtn"><svg viewBox="0 0 40 40"><path class="g" d="M16 4H38V9H16zM4 12H26V22H4zM4 24H16V36H4zM18 16H38V21H18zM18 28H38V33H18z"/></svg></div>
        <div class="sbtn on"><svg viewBox="0 0 40 40"><path class="sw3" d="M5 3H35V37H5z"/><path class="cbd" d="M9 7h4v4H9zM17 7h4v4h-4zM25 7h4v4h-4zM13 11h4v4h-4zM21 11h4v4h-4zM29 11h2v4h-2zM9 15h4v4H9zM17 15h4v4h-4zM25 15h4v4h-4zM13 19h4v4h-4zM21 19h4v4h-4zM9 23h4v4H9zM17 23h4v4h-4zM25 23h4v4h-4zM13 27h4v4h-4zM21 27h4v4h-4z"/></svg></div>
        <div class="sbtn"><svg viewBox="0 0 40 40"><path class="sg" d="M8 3H2V33H8M28 3h2"/><rect x="10" y="4" width="12" height="12" rx="2" fill="#7fd18a"/><circle cx="16" cy="24" r="6" fill="#7fd18a"/><path class="w" d="M24 16l14 14-6 1 4 7-3 1-4-7-5 5z"/></svg></div>
        <div class="sbtn on"><svg viewBox="0 0 40 40"><path class="sw3" d="M30 4L8 24V36H36"/></svg></div>
        <div class="sbtn on"><svg viewBox="0 0 40 40"><path class="sw3" d="M16 8H34V36H6V18"/><path class="sw" d="M2 2h10v10H2z"/></svg></div>
        <div class="sbtn on"><svg viewBox="0 0 40 40"><path class="w" d="M14 8l5 14 8 16-10-8L6 38l4-14z"/><circle class="w" cx="27" cy="11" r="8"/></svg></div>
        <div class="sbtn"><svg viewBox="0 0 40 40"><path class="g" d="M14 4l5 18 12 16-12-8L6 38l6-16z"/><path fill="#f2c050" d="M26 2l-6 12h5l-3 10 9-13h-5z"/></svg></div>
        <div class="sbtn"><svg viewBox="0 0 40 40"><path class="g" d="M20 2l4 20 10 16-14-8L6 38l10-16z"/></svg></div>
        <div class="scale">1:1<i class="tri"></i></div>
        <div class="sbtn"><svg viewBox="0 0 40 40"><path class="sg3" d="M4 2h12v12H4zM16 38l6-12 6 12z" transform="translate(-4 0)"/><circle class="sg3" cx="31" cy="18" r="6"/></svg></div>
        <div class="sbtn"><svg viewBox="0 0 40 40"><use href="#gear" transform="scale(2)"/></svg></div>
      </footer>
    </div>
  </div>
</div>

<aside class="layers">
  <div class="lbar"><i class="ldot"></i></div>
  <div class="lhead">
    <span class="ltitle">Layers</span>
    <div class="licons">
      <svg viewBox="0 0 40 40"><circle cx="24" cy="10" r="7" fill="#d8d8d8"/><path class="b" d="M10 18h24l-6 8H4z"/><path class="g" d="M10 26h24l-6 6H4zM8 34h24l-3 5H4z"/></svg>
      <svg viewBox="0 0 40 40"><path class="g" d="M12 2h22l-6 8H6zM10 13h22l-5 7H5zM8 23h18l-4 6H4z"/><path class="pen" d="M16 39l6-10 8-1 4 8-10 4z"/><path class="w" d="M28 24l6 2-2 7-4-3z"/></svg>
      <svg viewBox="0 0 40 40"><path class="g" d="M14 14h22l-6 7H8zM12 23h22l-6 7H6zM10 32h22l-5 7H4z"/><path class="b" d="M4 9l9-7v4c8 0 13 4 13 11-3-4-7-5-13-5v4z"/></svg>
      <svg viewBox="0 0 40 40"><path class="g" d="M12 2h22l-6 8H6zM10 13h22l-5 7H5z"/><path class="b" d="M10 24h20l-5 7H4z"/><path class="sw3" d="M32 22L20 38"/><path class="w" d="M16 30v9h9z"/></svg>
      <svg viewBox="0 0 40 40"><path class="g" d="M12 2h22l-6 8H6z"/><path class="b" d="M10 13h22l-5 7H5zM8 24h16l-4 6H4z"/><path class="sw3" d="M18 38l14-14"/><path class="w" d="M26 22h10v10z"/></svg>
      <svg viewBox="0 0 40 40"><path class="g" d="M12 2h22l-9 13H3z"/><g class="frz"><path d="M22 16V38M12 21l20 12M32 21L12 33"/><circle cx="22" cy="27" r="7"/></g></svg>
      <svg viewBox="0 0 40 40"><path class="g" d="M12 2h22l-9 13H3z"/><path fill="#8ee0e0" d="M16 26a8 8 0 1 1 14 0l-3 5h-8z"/><path class="w" d="M19 32h8v6h-8z"/></svg>
      <svg viewBox="0 0 40 40"><path class="g" d="M12 2h22l-9 13H3z"/><path fill="#8ee0e0" d="M14 24h16v15H14z"/><path d="M17 24v-5a5 5 0 0 1 10 0v5" fill="none" stroke="#8ee0e0" stroke-width="3"/><path class="k" d="M21 28h2v7h-2z"/></svg>
      <svg viewBox="0 0 40 40"><path class="g" d="M12 2h22l-9 13H3z"/><path fill="#f3cf85" d="M12 24h16v15H12z"/><path d="M24 24v-6a5 5 0 0 1 10 0v6" fill="none" stroke="#f3cf85" stroke-width="3"/><path class="k" d="M19 28h2v7h-2z"/></svg>
    </div>
  </div>
  <div class="lcurrent">
    <i class="lbulb"></i>
    <svg class="lsm dim" viewBox="0 0 20 28"><path d="M3 12h14v15H3z" fill="#697486"/><path d="M6 12V7a4 4 0 0 1 8 0v5" fill="none" stroke="#697486" stroke-width="2"/></svg>
    <svg class="lsm dim" viewBox="0 0 20 28"><g fill="none" stroke="#697486" stroke-width="2"><path d="M10 3v22M2 8l16 12M18 8L2 20"/><circle cx="10" cy="14" r="6"/></g></svg>
    <i class="swatch"></i>
    <span class="lname">0</span>
  </div>
  <div class="lstate">Unsaved Layer State</div>
  <div class="lhide"><svg viewBox="0 0 18 14"><path d="M2 2l7 10 7-10" fill="none" stroke="#b9bec6" stroke-width="2"/></svg><span>Hide Layer List</span></div>
  <div class="lthead">
    <div class="th eye"><svg viewBox="0 0 28 28"><ellipse cx="14" cy="14" rx="12" ry="13" fill="#d8d8d8"/><circle cx="14" cy="14" r="7" fill="#303642"/><circle cx="14" cy="14" r="4" fill="#d8d8d8"/></svg></div>
    <div class="th name"><svg viewBox="0 0 18 22"><path d="M0 0h18v22H0z" fill="#d8d8d8"/><path d="M15 3v16H5z" fill="#4e596c"/></svg><span>Name</span><i class="sort"></i><i class="sortup"></i></div>
    <div class="th cf"><svg viewBox="0 0 20 28"><g fill="none" stroke="#d8d8d8" stroke-width="2"><path d="M10 3v22M2 8l16 12M18 8L2 20"/><circle cx="10" cy="14" r="6"/></g></svg></div>
    <div class="th cl"><svg viewBox="0 0 20 28"><path d="M2 12h16v16H2z" fill="#d8d8d8"/><path d="M5 12V7a5 5 0 0 1 10 0v5" fill="none" stroke="#d8d8d8" stroke-width="2"/><path d="M9 16h2v8H9z" fill="#303642"/></svg></div>
    <div class="th cc"><svg viewBox="0 0 24 24"><path d="M2 2h20v3H2zM2 10h20v3H2zM2 18h20v5H2z" fill="#d8d8d8"/></svg></div>
    <div class="th cd"><svg viewBox="0 0 24 24"><path d="M2 3h3v2H2zM7 3h3v2H7zM12 3h3v2h-3zM17 3h3v2h-3zM2 11h8v2H2zM14 11h8v2h-8zM2 19h9v2H2zM14 19h8v2h-8z" fill="#d8d8d8"/></svg></div>
    <div class="th ce"><svg viewBox="0 0 24 24"><path d="M2 4h20v18H2zM6 0h12v4" fill="none" stroke="#d8d8d8" stroke-width="2"/><path d="M8 9h9v8H8z" fill="none" stroke="#d8d8d8" stroke-width="2"/></svg></div>
    <div class="th rest"></div>
  </div>
  <div class="lrow"><i class="lbulb small"></i><i class="swatch"></i><span class="lname">0</span><span class="ld">D...</span><i class="lline"></i></div>
  <div class="llist"></div>
  <div class="lfoot">
    <svg viewBox="0 0 32 36"><path class="sg" d="M10 2h18l-6 10H4zM6 16l-2 6h18l6-10M6 26l-2 6h18l6-10"/></svg>
    <svg viewBox="0 0 36 40"><path class="sw" d="M10 1h18l-6 10H4z"/><path class="sg" d="M6 15l-2 6h18l4-8M6 25l-2 6h10"/><path class="w" d="M14 20h20v18H14z"/><path class="k" d="M18 25h3v3h-3zM23 25h8v3h-8zM18 31h3v3h-3zM23 31h8v3h-8z"/></svg>
    <svg viewBox="0 0 32 36"><path class="g" d="M2 2h12l6 8h6v4H10L4 34H2z"/><path class="g" d="M12 14h18l-4 20H6z"/></svg>
    <svg viewBox="0 0 32 36"><path class="g" d="M2 2h12l6 8h6v2h-14L4 34H2z"/><path class="g" d="M13 14h17l-4 20H6z"/><path class="k" d="M19 16l-5 10h4l-2 6 7-9h-4l3-7z"/></svg>
  </div>
  <div class="lsearch"><svg viewBox="0 0 40 28"><circle cx="11" cy="11" r="9" fill="none" stroke="#222" stroke-width="2"/><path d="M17 18l7 8" stroke="#222" stroke-width="2"/><path d="M27 11l4 6 4-6" fill="none" stroke="#222" stroke-width="2"/></svg><span>Search for layer</span></div>
</aside>

<div class="dock">
  <div class="dk"><svg viewBox="0 0 84 84"><defs><linearGradient id="fa" x1="0" y1="0" x2="0" y2="1"><stop offset="0" stop-color="#5ec5fa"/><stop offset="1" stop-color="#2c6cf0"/></linearGradient></defs><rect width="84" height="84" rx="18" fill="#dfe6ee"/><path d="M18 0h28c-6 18-10 32-12 48h12c0 14 2 26 4 36H18A18 18 0 0 1 0 66V18A18 18 0 0 1 18 0z" fill="url(#fa)"/><path d="M22 25v10M60 25v10" stroke="#111" stroke-width="3"/><path d="M16 56c14 14 38 14 52 0" fill="none" stroke="#111" stroke-width="2.500"/></svg><i class="run"></i></div>
  <div class="dk"><svg viewBox="0 0 84 84"><rect width="84" height="84" rx="18" fill="#a5a9ad"/><rect x="14" y="14" width="15" height="15" rx="4" fill="#6ed552"/><rect x="35" y="14" width="15" height="15" rx="4" fill="#f4b52e"/><rect x="56" y="14" width="15" height="15" rx="4" fill="#eb8b2e"/><rect x="14" y="35" width="15" height="15" rx="4" fill="#d5342b"/><rect x="35" y="35" width="15" height="15" rx="4" fill="#c0c4c8"/><rect x="56" y="35" width="15" height="15" rx="4" fill="#ee4a5c"/><rect x="14" y="56" width="15" height="15" rx="4" fill="#9a4fd8"/><rect x="35" y="56" width="15" height="15" rx="4" fill="#3fa8f5"/><rect x="56" y="56" width="15" height="15" rx="4" fill="#5dd0a8"/></svg></div>
  <div class="dk"><svg viewBox="0 0 84 84"><rect width="84" height="84" rx="18" fill="#f5f5f5"/><circle cx="42" cy="42" r="36" fill="#2f86e0"/><circle cx="42" cy="42" r="30" fill="none" stroke="#cfe5fa" stroke-width="4" stroke-dasharray="1.500 3"/><path d="M64 16L36 36 48 48z" fill="#e2402e"/><path d="M20 68L36 36 48 48z" fill="#f2f2f2"/></svg><i class="run"></i></div>
  <div class="dk"><svg viewBox="0 0 84 84"><defs><linearGradient id="ma" x1="0" y1="0" x2="0" y2="1"><stop offset="0" stop-color="#2d75e8"/><stop offset="1" stop-color="#55c0f9"/></linearGradient></defs><rect width="84" height="84" rx="18" fill="url(#ma)"/><rect x="13" y="22" width="58" height="40" rx="3" fill="#ececec"/><path d="M14 24l28 22 28-22M14 60l20-20M70 60L50 40" fill="none" stroke="#b8b8b8" stroke-width="1.500"/></svg><i class="run"></i></div>
  <div class="dk"><svg viewBox="0 0 84 84"><rect width="84" height="84" rx="18" fill="#f3e9d0"/><path d="M44 0h22a18 18 0 0 1 18 18v20C64 38 50 24 44 0z" fill="#a4dc74"/><path d="M30 0h12L80 76" fill="none" stroke="#fff" stroke-width="2"/><path d="M0 30l24 14v40H18A18 18 0 0 1 0 66z" fill="#f8c8cc"/><path d="M24 40l60 40" stroke="#f0d040" stroke-width="12"/><path d="M18 0h14v84H18z" fill="#fff"/><path d="M21 0h8v36h-8z" fill="#2e80e8"/><ellipse cx="25" cy="46" rx="11" ry="16" fill="#fff"/><circle cx="25" cy="46" r="8" fill="#2e80e8"/><path d="M50 52h28c0 16-6 26-14 30-8-4-14-14-14-30z" fill="#2a58b0" stroke="#fff" stroke-width="2"/><path d="M52 52h24v7H52z" fill="#d83030"/><text class="dktxt" x="64" y="73">280</text></svg></div>
  <div class="dk"><svg viewBox="0 0 84 84"><rect width="84" height="84" rx="18" fill="#fafafa"/><g opacity=".85"><ellipse cx="42" cy="22" rx="10" ry="17" fill="#f19a3a"/><ellipse cx="42" cy="22" rx="10" ry="17" fill="#f0d53a" transform="rotate(45 42 42)"/><ellipse cx="42" cy="22" rx="10" ry="17" fill="#8cc63f" transform="rotate(90 42 42)"/><ellipse cx="42" cy="22" rx="10" ry="17" fill="#4fb08a" transform="rotate(135 42 42)"/><ellipse cx="42" cy="22" rx="10" ry="17" fill="#4f9fdf" transform="rotate(180 42 42)"/><ellipse cx="42" cy="22" rx="10" ry="17" fill="#8a7cc8" transform="rotate(225 42 42)"/><ellipse cx="42" cy="22" rx="10" ry="17" fill="#c06aa8" transform="rotate(270 42 42)"/><ellipse cx="42" cy="22" rx="10" ry="17" fill="#e85a4a" transform="rotate(315 42 42)"/></g></svg></div>
  <div class="dk"><svg viewBox="0 0 84 84"><rect width="84" height="84" rx="18" fill="#f7f6f4"/><path d="M0 24V18A18 18 0 0 1 18 0h48a18 18 0 0 1 18 18v6z" fill="#e3605a"/><text class="dkmar" x="42" y="17">MAR</text><text class="dk23" x="42" y="70">23</text></svg></div>
  <div class="dk"><svg viewBox="0 0 84 84"><rect width="84" height="84" rx="18" fill="#fbfbfb"/><circle cx="16" cy="20" r="6" fill="#fff" stroke="#2a78e8" stroke-width="3"/><circle cx="16" cy="20" r="2.500" fill="#2a78e8"/><circle cx="16" cy="42" r="6" fill="#fff" stroke="#e04030" stroke-width="3"/><circle cx="16" cy="42" r="2.500" fill="#e04030"/><circle cx="16" cy="63" r="6" fill="#fff" stroke="#e88a20" stroke-width="3"/><circle cx="16" cy="63" r="2.500" fill="#e88a20"/><path d="M30 20h44M30 42h44M30 63h44" stroke="#b8b8b8" stroke-width="2"/></svg></div>
  <div class="dk"><svg viewBox="0 0 84 84"><defs><linearGradient id="no" x1="0" y1="0" x2="0" y2="1"><stop offset="0" stop-color="#fbd65a"/><stop offset="1" stop-color="#f4c43a"/></linearGradient></defs><rect width="84" height="84" rx="18" fill="#efece6"/><path d="M0 22V18A18 18 0 0 1 18 0h48a18 18 0 0 1 18 18v4z" fill="url(#no)"/><path d="M0 22h84v2H0z" fill="#a8a8a8"/><path d="M0 42h84M0 63h84" stroke="#d8d6d0" stroke-width="2"/></svg><i class="run"></i></div>
  <div class="dk"><svg viewBox="0 0 84 84"><path d="M8 10L62 2l10 72-54 12z" fill="#fff"/><path d="M8 10L62 2l3 18-54 8z" fill="#f0a040"/><text class="dkpg" x="13" y="23" transform="rotate(-9 13 23)">PAGES</text><path d="M14 30l26-4 4 26-26 4z" fill="#3c8ee0"/><circle cx="29" cy="40" r="7" fill="#f0a030"/><path d="M20 60l26-4M21 65l26-4M22 70l26-4" stroke="#999" stroke-width="1"/><path d="M74 2l4 2-16 74-4 8-2-8z" fill="#f0a030"/></svg></div>
  <div class="dk"><svg viewBox="0 0 84 84"><rect width="84" height="84" rx="18" fill="#c2c4c6"/><circle cx="42" cy="42" r="36" fill="#55585c"/><circle cx="42" cy="42" r="30" fill="none" stroke="#9a9da0" stroke-width="5" stroke-dasharray="3 3"/><circle cx="42" cy="42" r="22" fill="#c4c6c8"/><path d="M42 42V22M42 42L25 54M42 42l17 12" stroke="#55585c" stroke-width="5"/><circle cx="42" cy="42" r="7" fill="#55585c"/></svg></div>
  <div class="dk"><svg viewBox="0 0 84 84" class="tall"><circle cx="42" cy="42" r="52" fill="#050505"/><path d="M-10 24h104v20H54L42 92H28l8-48H-10z" fill="#fff"/></svg></div>
  <div class="dk"><svg viewBox="0 0 104 104" class="tall"><rect width="104" height="104" fill="#fbf0ea"/><path d="M0 4h104v70H0z" fill="#f4dfd5"/><path d="M44 12h18l24 84H68l-16-52-14 52H20z" fill="#b23b30"/><path d="M50 32l-10 34h22z" fill="#6b2520"/><path d="M52 42l-6 22h12z" fill="#d0c0b0"/><path d="M22 90l8-22 44-8 4 8-40 10-6 16z" fill="#d2473a"/></svg><i class="run"></i></div>
  <div class="dk"><svg viewBox="0 0 96 96" class="tall"><defs><linearGradient id="ar" x1="0" y1="0" x2="1" y2="1"><stop offset="0" stop-color="#6f98ee"/><stop offset="1" stop-color="#2c4aa0"/></linearGradient></defs><circle cx="50" cy="46" r="44" fill="url(#ar)"/><path d="M4 78C16 46 32 12 60 10c14 0 22 14 20 34" fill="none" stroke="#fff" stroke-width="7"/><ellipse cx="80" cy="57" rx="4" ry="5" fill="#fff"/><text class="dkedu" x="2" y="92">EDU</text></svg><i class="run"></i></div>
  <i class="dksep"></i>
  <div class="dk"><svg viewBox="0 0 90 90" class="tall"><path d="M6 84l8-24C0 30 22 2 46 2c24 0 42 20 42 42 0 26-28 52-60 32z" fill="#f2f2f2"/><path d="M16 72l6-14C8 34 24 8 46 8c20 0 36 16 36 36 0 24-26 44-54 26z" fill="#5fbe60"/><path d="M30 18c-6 4-8 8-6 16 4 16 16 32 32 36 8 2 12-2 14-8l-12-8-6 4c-6-2-12-10-14-18l4-6-6-16z" fill="#f4f4f4"/></svg><i class="run"></i></div>
  <div class="dk"><svg viewBox="0 0 90 90" class="tall"><circle cx="45" cy="45" r="44" fill="#5fd068"/><path d="M16 30c18-6 40-4 58 6M20 46c16-4 34-4 48 6M24 60c14-3 28-2 40 5" fill="none" stroke="#151515" stroke-width="8" stroke-linecap="round"/></svg><i class="run"></i></div>
  <div class="dk"><svg viewBox="0 0 84 84"><rect width="84" height="84" rx="18" fill="#f8f8f8"/><circle cx="42" cy="42" r="35" fill="#d05a48"/><path d="M42 42L72 25A35 35 0 0 1 30 75z" fill="#f5c75c"/><path d="M42 42L30 75A35 35 0 0 1 11 25z" fill="#4a9b60"/><circle cx="42" cy="42" r="15" fill="#fafafa"/><circle cx="42" cy="42" r="11" fill="#5288ec"/></svg><i class="run"></i></div>
  <div class="dk"><svg viewBox="0 0 90 90" class="tall"><rect x="2" y="2" width="86" height="86" rx="14" fill="#0d2630" stroke="#5cc8f4" stroke-width="4"/><text class="dkps" x="45" y="66">Ps</text></svg><i class="run"></i></div>
  <div class="dk"><svg viewBox="0 0 90 90" class="tall"><rect x="0" y="0" width="90" height="90" rx="14" fill="#454545"/><path d="M72 10L18 34v14l54 24V56L32 40l40-14z" fill="#f09a30"/><path d="M72 48L18 66v14l54-24z" fill="#f0a040" opacity=".5"/></svg><i class="run"></i></div>
  <div class="dk"><svg viewBox="0 0 84 84"><path d="M0 3l4-3 4 3 4-3 4 3 4-3 4 3 4-3 4 3 4-3 4 3 4-3 4 3 4-3 4 3 4-3 4 3 4-3 4 3 4-3v84H0z" fill="#b5261a"/><text class="dkfz" x="42" y="66">Fz</text></svg><i class="run"></i></div>
  <div class="dk"><svg viewBox="0 0 84 84"><rect width="84" height="84" rx="18" fill="#3f88f0"/><rect x="18" y="26" width="32" height="32" rx="6" fill="#fff"/><path d="M54 38l12-10v28L54 46z" fill="#fff"/></svg><i class="run"></i></div>
  <div class="dk"><svg viewBox="0 0 84 84"><rect width="78" height="84" rx="14" fill="#f2f2f2"/><rect x="6" y="6" width="66" height="72" rx="8" fill="#9ab8e6"/><path d="M6 48h66v30H6z" fill="#204a80"/><path d="M6 64c14-8 30-2 44 0v14H6z" fill="#e4e8ec"/><path d="M54 46h22l6 32-6 6H58l-6-6z" fill="#d8dbde" opacity=".9"/><rect x="56" y="38" width="22" height="12" rx="3" fill="#1a1a1a"/></svg><i class="run"></i></div>
  <i class="dksep"></i>
  <div class="dk"><svg viewBox="0 0 90 90"><path d="M8 0h72v24H8z" fill="#b5261a"/><path d="M24 0h22l4 18H24z" fill="#fff"/><path d="M2 12h66l12 32H2z" fill="#16181c"/><path d="M64 2l22 42-22-16z" fill="#f4f4f4"/><rect x="0" y="26" width="84" height="60" rx="2" fill="#212328"/><path d="M38 52l6 4-4 8z" fill="#888"/></svg></div>
  <div class="dk"><svg viewBox="0 0 100 90"><rect x="2" y="0" width="98" height="76" fill="#1b1c1f"/><rect x="66" y="62" width="32" height="42" rx="6" fill="#f6f6f6"/><circle cx="82" cy="83" r="13" fill="#d05a48"/><path d="M82 83l12-5a13 13 0 0 1-17 17z" fill="#f5c75c"/><path d="M82 83l-5 12a13 13 0 0 1-8-20z" fill="#4a9b60"/><circle cx="82" cy="83" r="5" fill="#5288ec" stroke="#fff" stroke-width="2"/></svg></div>
  <div class="dk"><svg viewBox="0 0 100 90"><rect x="0" y="0" width="98" height="76" fill="#353535"/><rect x="18" y="26" width="30" height="38" fill="#8c8a6c"/><rect x="72" y="10" width="20" height="22" fill="#b02830"/><rect x="72" y="38" width="20" height="30" fill="#4a4a4a"/><rect x="64" y="58" width="34" height="46" rx="6" fill="#0d2630" stroke="#5cc8f4" stroke-width="2"/><text class="dkps2" x="81" y="88">Ps</text></svg></div>
  <div class="dk"><svg viewBox="0 0 84 104" class="tall"><defs><linearGradient id="tr" x1="0" y1="0" x2="1" y2="0"><stop offset="0" stop-color="#8a8d90"/><stop offset=".5" stop-color="#b0b2b4"/><stop offset="1" stop-color="#6e7174"/></linearGradient></defs><path d="M6 18h72l-8 80a6 6 0 0 1-6 5H20a6 6 0 0 1-6-5z" fill="url(#tr)"/><ellipse cx="42" cy="18" rx="36" ry="8" fill="#eee"/><path d="M14 18l14-16 12 12 16-12 10 16z" fill="#ddd"/></svg></div>
</div>

<svg class="defs" width="0" height="0"><defs><g id="gear"><circle cx="10" cy="10" r="5.400" fill="none" stroke="#dcdcdc" stroke-width="4.400"/><circle cx="10" cy="10" r="8.200" fill="none" stroke="#dcdcdc" stroke-width="3.400" stroke-dasharray="3.400 3.040"/></g></defs></svg>
</body>
</html>
```

FILE: styles.css
```css
* { box-sizing: border-box; }
html, body { margin: 0; padding: 0; }
body { width: 3584px; height: 2240px; overflow: hidden; position: relative; background: #0e1a26; font-family: "Open Sans", "Liberation Sans", sans-serif; }
i { display: block; font-style: normal; }
p { margin: 0; }
.wallpaper { position: absolute; inset: 0; }
.defs { position: absolute; }

/* shared svg paints */
.g { fill: #d9d9d9; } .w { fill: #fff; } .b { fill: #88c2f7; } .lb { fill: #b5dcfc; } .d { fill: #a2a2a2; } .k { fill: #3d4656; }
.o { fill: #ecb087; } .y { fill: #f0d58c; } .ly { fill: #f7e6b0; } .yd { fill: #c9b36f; } .r { fill: #d9686a; } .gr { fill: #6fcf80; }
.pen { fill: #f2cd78; } .m { fill: #8e9297; } .lt { fill: #f4cb6a; } .lt2 { fill: #f6d287; } .ck { fill: #5e5e5e; } .k2 { fill: #e0eefc; } .cbd { fill: #fff; }
.sg, .sb, .sw, .sr, .sgr, .sk, .sy, .sk2, .sy2, .sg3, .sb3, .sw3, .sk3, .sr3, .sgr3, .mid, .mid2 { fill: none; stroke-width: 2; }
.sg, .sg3 { stroke: #d9d9d9; } .sb, .sb3 { stroke: #88c2f7; } .sw, .sw3 { stroke: #fff; } .sr, .sr3 { stroke: #e57f7f; } .sgr, .sgr3 { stroke: #7fd18a; }
.sk, .sk2, .sk3 { stroke: #3d4656; } .sy { stroke: #b9a467; stroke-width: 1.500; } .sy2 { stroke: #f0d58c; } .mid { stroke: #a2a2a2; stroke-width: 3; } .mid2 { stroke: #8d8d8d; }
.sg3, .sb3, .sw3, .sk3, .sr3, .sgr3 { stroke-width: 3; }
.frz { fill: none; stroke: #8ee0e0; stroke-width: 2.500; }
.ux { font: 700 24px "Open Sans", sans-serif; fill: #88c2f7; }
.ux3 { font: 700 34px "Open Sans", sans-serif; fill: #88c2f7; }

/* menu bar */
.menubar { height: 48px; background: #a1d1fb; display: flex; align-items: center; color: #0c131b; font: 500 25.400px/48px Inter, "Liberation Sans", sans-serif; position: relative; }
.apple { width: 34px; height: 38px; margin-left: 40px; fill: #0c131b; }
.appname { margin-left: 41px; font-weight: 700; font-size: 26px; }
.menus { display: flex; gap: 41.600px; margin-left: 42px; font-weight: 400; }
.tray { display: flex; margin-left: auto; align-items: center; gap: 26px; }
.tray svg { width: 44px; height: 40px; }
.tray svg:nth-child(2) { margin-left: 0; }
.tray svg:nth-child(3) { margin-left: 4px; }
.tray svg:nth-child(4) { width: 54px; margin-left: -2px; }
.tray svg:nth-child(5) { margin-left: -1px; }
.tray svg:nth-child(6) { margin-left: -1px; }
.tray svg:nth-child(7) { margin-left: -3px; }
.tray svg:nth-child(8) { margin-left: -5px; }
.tray svg:nth-child(9) { margin-left: -8px; }
.clock { display: flex; gap: 22px; margin: 0 38px 0 25px; font-weight: 400; font-size: 26px; }

/* application window */
.window { height: 2045px; position: relative; border-radius: 18px; overflow: hidden; background: #3d4350; border-top: 2px solid #11161c; display: flex; flex-direction: column; }
.titlebar { height: 118px; background: #cdd1d4; border-bottom: 3px solid #101418; flex: none; }
.titlerow { height: 58px; display: flex; align-items: center; position: relative; padding-top: 0; }
.lights { display: flex; gap: 16px; margin-left: 16px; margin-top: 0; }
.light { width: 24px; height: 24px; border-radius: 50%; background: #6f7476; border: 1px solid #55595c; }
.light.first { background: radial-gradient(circle, #111 0 4px, #6f7476 5px); }
.doctitle { position: absolute; left: 1697px; top: 8px; color: #e4e6e8; font: 700 26px/40px "Open Sans", sans-serif; letter-spacing: -.5px; }
.user { position: absolute; right: 0; top: 0; width: 240px; height: 44px; background: #475063; border-left: 2px solid #222933; border-bottom: 3px solid #222933; border-radius: 0 14px 0 0; display: flex; align-items: center; color: #eef0f2; font: 400 24px "Open Sans", sans-serif; padding-left: 8px; }
.usericon { width: 32px; height: 38px; margin-right: 12px; }
.usertri { margin-left: auto; margin-right: 8px; width: 0; height: 0; border: 7px solid transparent; border-top: 12px solid #dfe2e5; border-bottom: 0; }
.toolbar { display: flex; gap: 82px; margin-left: 725px; margin-top: 2px; }
.tgroup { display: flex; gap: 2px; }
.tb { width: 64px; height: 40px; background: #3d4656; border-radius: 5px; position: relative; }
.tb svg { width: 64px; height: 40px; display: block; }
.badge .dot { position: absolute; right: -2px; top: 1px; width: 17px; height: 22px; border-radius: 50%; background: #e97a3d; border: 2px solid #f4f4f4; }

/* palette */
.main { flex: 1; display: flex; min-height: 0; }
.palette { width: 368px; flex: none; background: #3d4350; display: flex; flex-direction: column; position: relative; }
.ptabs { display: flex; height: 44px; flex: none; color: #9aa0a8; font: 400 23px/44px "Open Sans", sans-serif; }
.ptab { width: 160px; text-align: center; background: #303642; border-right: 1px solid #20252c; }
.ptab.active { background: #3d4350; color: #f2f3f4; border-right: 2px solid #20252c; }
.pcollapse { flex: 1; text-align: center; background: #3b4454; color: #9aa0a8; }
.psec { border-top: 0; padding: 0 8px; position: relative; }
.psec + .psec::before { content: ""; position: absolute; left: 8px; right: 8px; top: -2px; height: 3px; background: #2a2f38; }
.s192 { height: 192px; } .s143 { height: 143px; } .s240 { height: 240px; } .s241 { height: 241px; }
.phead { height: 42px; display: flex; align-items: center; color: #e8e9ea; font: 500 20px/42px "Open Sans", sans-serif; padding-top: 3px; }
.caret { width: 0; height: 0; border: 9px solid transparent; border-top: 11px solid #f2f2f2; border-bottom: 0; margin-right: 8px; }
.gear { width: 22px; height: 22px; margin-left: auto; margin-right: 1px; }
.pgrid { display: grid; grid-template-columns: repeat(8, 44px); align-items: center; grid-auto-flow: row dense; }
.rows-a { grid-template-rows: 44px 44px 52px; }
.rows-b { grid-template-rows: 88px; }
.rows-c { grid-template-rows: 90px 50px 44px; }
.rows-d { grid-template-rows: 48px 38px 60px 34px; }
.bi { width: 88px; height: 88px; grid-column: span 2; grid-row: span 2; display: block; }
.big2 { margin-top: 10px; }
.rows-b .bi, .rows-c .bi { grid-row: span 1; }
.si { width: 44px; height: 44px; display: block; }
.pfoot { margin-top: auto; height: 46px; display: flex; align-items: center; gap: 36px; padding-left: 31px; padding-bottom: 0; }
.pfoot svg { width: 24px; height: 24px; }
.pfoot svg + svg { width: 28px; }

/* document tabs */
.work { flex: 1; display: flex; flex-direction: column; min-width: 0; position: relative; }
.doctabs { height: 44px; flex: none; background: #3b4454; display: flex; color: #b4b9c0; font: 400 21px/44px "Open Sans", sans-serif; }
.doctabs > div { border-right: 2px solid #2a303a; }
.dt-grid { width: 48px; display: grid; grid-template-columns: 14px 14px; grid-template-rows: 14px 14px; gap: 2px; padding: 8px 10px; border-left: 2px solid #2a303a; }
.dt-grid i { background: #dcdcdc; }
.dt-grid i:first-child { background: #88c2f7; }
.dt-plus { width: 46px; text-align: center; font-size: 34px; font-weight: 300; line-height: 40px; color: #d8d8d8; }
.dt { width: 258px; padding-left: 8px; }
.dt.active { background: #4a5569; color: #f4f5f6; font-weight: 600; padding-left: 8px; }

/* canvas */
.canvas { flex: 1; position: relative; background: #212831; min-height: 0; overflow: hidden; }
.scene { position: absolute; left: 0; top: 0; width: 3216px; height: 1836px; }
.gl { stroke: #2e3540; stroke-width: 1; fill: none; }
.gm { stroke: #3e4652; stroke-width: 1; fill: none; }
.axg { stroke: #2e7a2e; stroke-width: 1.200; fill: none; }
.axr { stroke: #8c3b3f; stroke-width: 1.200; fill: none; }
.cb { stroke: #3568c0; stroke-width: 1.500; } .cg { stroke: #2e8a36; stroke-width: 1.500; } .cr { stroke: #a23e4a; stroke-width: 1.500; }
.cs { fill: none; stroke: #fff; stroke-width: 1.500; }
.boxfill { fill: rgba(255,255,255,.03); }
.shade { fill: rgba(60,60,60,.12); }
.gridover { fill: none; stroke: #55595e; stroke-width: 1; opacity: .5; }
.w1 { fill: none; stroke: #f4f5f5; stroke-width: 1.800; }
.w2 { fill: none; stroke: #e6e8e8; stroke-width: 1.300; opacity: .38; }
.w3 { fill: none; stroke: #eee; stroke-width: 1.300; opacity: .6; }
.ub { stroke: #3f6fb4; stroke-width: 13; stroke-linecap: round; }
.ug { stroke: #378a36; stroke-width: 12; stroke-linecap: round; }
.ur { stroke: #ba5a5c; stroke-width: 12; stroke-linecap: round; }
.lz, .ly2, .lx { font: 300 44px "Liberation Sans", sans-serif; }
.lz { fill: #3d7ee0; } .ly2 { fill: #3da24a; } .lx { fill: #c24a4a; }

.viewlabel { position: absolute; left: 32px; top: 13px; display: flex; align-items: center; color: #a6abb1; font: 400 21px/26px "DejaVu Sans", "Open Sans", sans-serif; letter-spacing: 1.100px; }
.vplus { margin-right: 20px; font-size: 22px; }
.vsep { border-left: 2px solid #a6abb1; padding: 0 9px; line-height: 28px; }
.vsep + .vsep { padding-left: 12px; letter-spacing: 1.400px; }

.sidestrip { position: absolute; right: 0; top: 0; bottom: 5px; width: 45px; background: #2f3440; display: flex; flex-direction: column; color: #d4d6d9; font: 400 24px "Open Sans", sans-serif; }
.side { display: flex; justify-content: center; align-items: flex-end; padding-right: 6px; }
.side span { writing-mode: vertical-rl; transform: rotate(180deg); }
.s1 { height: 1220px; border-bottom: 3px solid #272b35; padding-bottom: 196px; }
.s2 { flex: 1; padding-bottom: 270px; }

/* command window */
.command { position: absolute; left: 1086px; top: 1480px; width: 994px; display: flex; flex-direction: column; align-items: flex-end; }
.cmdlog { width: 916px; height: 304px; background: #3b4453; padding: 6px 8px; color: #c9cdd2; font: 400 20.400px/30px "Open Sans", sans-serif; position: relative; letter-spacing: .1px; white-space: nowrap; }
.num-wide { letter-spacing: .8px; }
.num-tight { letter-spacing: -.75px; }
.scrollthumb { position: absolute; right: 8px; bottom: 2px; width: 7px; height: 40px; border-radius: 4px; background: #8c9097; }
.cmdinput { display: flex; height: 46px; width: 994px; margin-top: 2px; }
.prompt { width: 76px; background: #3b4453; color: #d8dadd; display: flex; align-items: center; justify-content: center; gap: 8px; font: 400 22px "DejaVu Sans Mono", monospace; margin-right: 2px; }
.field { flex: 1; background: #4d5a6d; display: flex; align-items: center; justify-content: space-between; padding: 0 8px; color: #a7aeb8; font: italic 400 23.500px "Open Sans", sans-serif; }
.field em { font-style: italic; }
.tri { width: 0; height: 0; border: 6px solid transparent; border-top: 10px solid #aeb2b8; border-bottom: 0; }

/* status bar */
.status { height: 43px; flex: none; background: #3a4252; display: flex; align-items: stretch; color: #c3c7cc; font: 400 21px/41px "Open Sans", sans-serif; border-bottom: 2px solid #2a303a; }
.stab { width: 116px; text-align: center; margin-left: 2px; border-right: 2px solid #2a303a; }
.stab.active { width: 118px; background: #4a5569; color: #eceef0; font-weight: 600; border-right: 0; }
.splus { width: 44px; text-align: center; font-size: 30px; border-right: 2px solid #2a303a; margin-left: 2px; }
.coords { margin-left: auto; color: #a9adb3; font-size: 25px; padding: 0 8px 0 16px; border-left: 2px solid #2a303a; white-space: nowrap; }
.sbtn { width: 40px; height: 41px; margin-right: 4px; flex: none; }
.sbtn.on { background: #5c7faa; }
.sbtn svg { width: 40px; height: 40px; display: block; padding: 3px; }
.scale { width: 62px; display: flex; align-items: center; gap: 6px; color: #c8cbd0; font-size: 23px; margin-right: 10px; }

/* layers palette */
.layers { position: absolute; left: 2783px; top: 153px; width: 801px; height: 798px; background: #394150; border-radius: 8px 0 0 8px; box-shadow: 0 0 14px rgba(0,0,0,.35); color: #e8e9eb; font-family: "Open Sans", sans-serif; }
.lbar { height: 38px; background: #303642; border-bottom: 2px solid #2a303a; border-radius: 8px 0 0 0; padding: 10px 12px; }
.ldot { width: 17px; height: 17px; border-radius: 50%; background: #5a6980; }
.lhead { height: 63px; position: relative; }
.ltitle { position: absolute; left: 19px; top: -2px; font-size: 24px; line-height: 34px; }
.licons { position: absolute; left: 297px; top: 4px; display: flex; gap: 9px; }
.licons svg { width: 40px; height: 40px; }
.lcurrent { margin-left: 20px; height: 48px; background: #4e596c; border: 2px solid #2c333e; border-right: 0; border-radius: 4px 0 0 4px; display: flex; align-items: center; padding-left: 16px; }
.lbulb { width: 18px; height: 22px; border-radius: 50%; background: #d8d8d8; }
.lbulb.small { width: 18px; height: 20px; }
.lsm { width: 18px; height: 26px; margin-left: 16px; }
.swatch { width: 18px; height: 22px; background: #fff; border: 3px solid #0c0c0c; margin-left: 14px; }
.lname { margin-left: 24px; font-size: 22px; }
.lstate { margin: 9px 0 0 23px; height: 49px; background: #4e596c; border: 2px solid #2c333e; border-right: 0; border-radius: 4px 0 0 4px; padding-left: 12px; font: 600 21px/45px "Open Sans", sans-serif; color: #f4f5f6; }
.lhide { height: 53px; display: flex; align-items: center; padding-left: 28px; color: #b9bec6; font-size: 22px; padding-bottom: 2px; margin-bottom: 2px; }
.lhide svg { width: 16px; height: 12px; margin-right: 24px; }
.lthead { margin-left: 20px; height: 48px; display: flex; background: #303642; border-bottom: 1px solid #2a303a; }
.th { display: flex; align-items: center; justify-content: center; border-right: 1px solid #3a424f; }
.th svg { width: 22px; height: 26px; }
.eye { width: 53px; } .th.eye svg { width: 26px; height: 28px; }
.name { width: 282px; background: #4e596c; justify-content: flex-start; padding-left: 8px; position: relative; color: #dcdfe2; font-size: 23px; font-weight: 500; }
.name svg { width: 18px; height: 22px; margin-right: 12px; }
.sort { position: absolute; right: 14px; top: 12px; width: 12px; height: 24px; background: linear-gradient(#b0b5bc 0 40%, transparent 40% 60%, #b0b5bc 60%); clip-path: polygon(50% 0, 100% 40%, 0 40%, 0 60%, 100% 60%, 50% 100%); }
.sortup { position: absolute; left: 135px; bottom: 0; width: 0; height: 0; border: 7px solid transparent; border-bottom: 18px solid #4e92e6; border-top: 0; }
.cf { width: 45px; } .cl { width: 45px; } .cc { width: 92px; } .cd { width: 95px; } .ce { width: 45px; }
.rest { flex: 1; background: #2f3135; border: 0; }
.lrow { margin-left: 23px; height: 38px; background: #8e9bac; margin-top: 1px; display: flex; align-items: center; padding-left: 14px; font-size: 24px; color: #f0f2f4; position: relative; }
.lrow .swatch { margin-left: 22px; }
.lrow .lname { margin-left: 18px; }
.ld { position: absolute; left: 436px; }
.lline { position: absolute; left: 530px; top: 18px; width: 64px; height: 2px; background: #f2f2f2; }
.llist { margin-left: 20px; height: 326px; background: #4e5a6c; border-left: 2px solid #2c333e; border-bottom: 3px solid #2c333e; }
.lfoot { height: 52px; display: flex; align-items: center; margin-left: 35px; gap: 30px; }
.lfoot svg { width: 30px; height: 34px; }
.lsearch { margin-left: 21px; height: 40px; background: #fff; border-radius: 10px 0 0 10px; display: flex; align-items: center; padding-left: 8px; color: #bdbdbd; font-size: 26px; }
.lsearch svg { width: 38px; height: 28px; margin-right: 8px; }

/* dock */
.dock { position: absolute; left: 281px; top: 2097px; width: 3021px; height: 132px; padding-left: 3px; display: flex; align-items: flex-start; background: linear-gradient(90deg, #1a2735, #27353f 60%, #25343f); border: 2px solid #3a4650; border-radius: 32px; }
.dk { width: 112px; height: 128px; flex: none; display: flex; justify-content: center; position: relative; padding-top: 17px; }
.dk svg { width: 84px; height: 84px; overflow: visible; }
.dk svg.tall { height: 100px; width: 92px; margin-top: -8px; }
.run { position: absolute; left: 53px; top: 120px; width: 6px; height: 8px; border-radius: 50%; background: #8ea0b0; }
.dksep { width: 1px; height: 98px; background: #566570; margin: 16px 24px 0 24px; flex: none; }
.dkmar { font: 700 15px "Liberation Sans", sans-serif; fill: #fff; text-anchor: middle; }
.dk23 { font: 400 50px "Liberation Sans", sans-serif; fill: #222; text-anchor: middle; }
.dktxt { font: 700 13px "Open Sans", sans-serif; fill: #fff; text-anchor: middle; }
.dkpg { font: 600 11px "Open Sans", sans-serif; fill: #fff; }
.dkedu { font: 600 22px "Open Sans", sans-serif; fill: #f2f2e8; }
.dkps { font: 600 52px "Open Sans", sans-serif; fill: #d8f2fc; text-anchor: middle; }
.dkps2 { font: 600 24px "Open Sans", sans-serif; fill: #d8f2fc; text-anchor: middle; }
.dkfz { font: italic 800 58px "Open Sans", sans-serif; fill: #fff; text-anchor: middle; }
```
